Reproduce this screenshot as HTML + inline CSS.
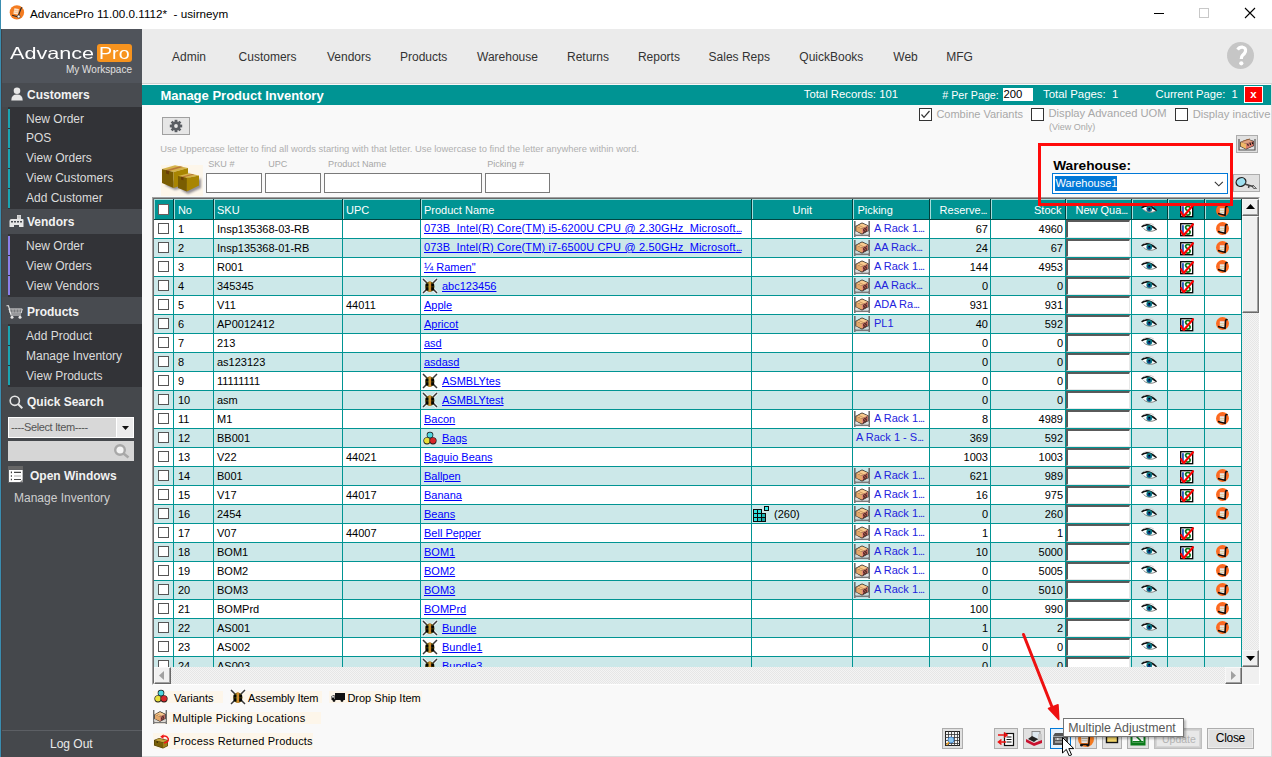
<!DOCTYPE html><html><head><meta charset='utf-8'><style>
*{margin:0;padding:0;box-sizing:border-box}
html,body{width:1272px;height:757px;overflow:hidden;background:#f9f9f9;font-family:"Liberation Sans",sans-serif;position:relative}
.a{position:absolute}
.nw{white-space:nowrap}
</style></head><body><div class="a" style="left:0;top:0;width:1272px;height:29px;background:#fff"></div>
<div class="a" style="left:0;top:0;width:1px;height:757px;background:#3a8db0"></div>
<div class="a nw" style="left:30px;top:8px;font-size:11.7px;line-height:12px;color:#000">AdvancePro 11.00.0.1112*&nbsp; - usirneym</div>
<svg class="a" style="left:9px;top:5px" width="16" height="16" viewBox="0 0 16 16"><circle cx="7.9" cy="7.4" r="7.2" fill="#f47c20"/><path d="M5.4 3.2 L9.9 4 L8.9 9.6 L4.4 8.8 Z" fill="#fde6cc"/><path d="M5 5.2 L9.4 6 M4.7 7 L9.1 7.8" stroke="#f0b080" stroke-width="0.6"/><path d="M13 2.4 L12.1 3.4 L9.3 11 M3.1 10.3 L9.4 12" stroke="#2a2a2a" stroke-width="1.1" fill="none"/><circle cx="9.7" cy="11.5" r="1.5" fill="#fff" stroke="#333" stroke-width="0.6"/></svg>
<div class="a" style="left:1154px;top:13px;width:10px;height:1px;background:#000"></div>
<div class="a" style="left:1199px;top:8px;width:10px;height:10px;border:1px solid #c8c8c8"></div>
<svg class="a" style="left:1244px;top:7px" width="12" height="12" viewBox="0 0 12 12"><path d="M1 1 L11 11 M11 1 L1 11" stroke="#000" stroke-width="1.1"/></svg>
<div class="a" style="left:1px;top:29px;width:141px;height:728px;background:#45484c"></div>
<div class="a" style="left:1px;top:29px;width:141px;height:54px;background:#50545b"></div>
<div class="a nw" style="left:10px;top:45.1px;font-size:16.5px;line-height:16.5px;color:#fff;transform-origin:0 0;transform:scaleX(1.31)">Advance</div>
<div class="a" style="left:97px;top:44px;width:35px;height:18px;background:#f7931e;border-radius:3px"></div>
<div class="a nw" style="left:99px;top:45.1px;font-size:16.5px;line-height:16.5px;color:#fff;transform-origin:0 0;transform:scaleX(1.19)">Pro</div>
<div class="a nw" style="left:66px;top:64.53px;font-size:10px;line-height:10px;color:#e0e0e0;font-weight:normal;">My Workspace</div>
<div class="a" style="left:1px;top:83px;width:141px;height:24px;background:#484b50"></div>
<svg class="a" style="left:11px;top:87px" width="12" height="14" viewBox="0 0 12 14"><circle cx="6" cy="3.8" r="3.3" fill="#e8e8e8"/><path d="M0.3 13.5 Q0.3 7.6 6 7.6 Q11.7 7.6 11.7 13.5 Z" fill="#e8e8e8"/></svg>
<div class="a nw" style="left:27px;top:89.24px;font-size:12px;line-height:12px;color:#f2f2f2;font-weight:bold;">Customers</div>
<div class="a" style="left:8px;top:107px;width:134px;height:102px;background:#323337"></div>
<div class="a" style="left:8px;top:109px;width:2px;height:19px;background:#1aa3b0"></div>
<div class="a nw" style="left:26px;top:112.84px;font-size:12px;line-height:12px;color:#dcdcdc;font-weight:normal;">New Order</div>
<div class="a" style="left:8px;top:129px;width:2px;height:19px;background:#1aa3b0"></div>
<div class="a nw" style="left:26px;top:131.74px;font-size:12px;line-height:12px;color:#dcdcdc;font-weight:normal;">POS</div>
<div class="a" style="left:8px;top:149px;width:2px;height:19px;background:#1aa3b0"></div>
<div class="a nw" style="left:26px;top:151.74px;font-size:12px;line-height:12px;color:#dcdcdc;font-weight:normal;">View Orders</div>
<div class="a" style="left:8px;top:169px;width:2px;height:19px;background:#1aa3b0"></div>
<div class="a nw" style="left:26px;top:171.54px;font-size:12px;line-height:12px;color:#dcdcdc;font-weight:normal;">View Customers</div>
<div class="a" style="left:8px;top:189px;width:2px;height:19px;background:#1aa3b0"></div>
<div class="a nw" style="left:26px;top:191.94px;font-size:12px;line-height:12px;color:#dcdcdc;font-weight:normal;">Add Customer</div>
<div class="a" style="left:1px;top:209px;width:141px;height:25px;background:#484b50"></div>
<svg class="a" style="left:9px;top:215px" width="15" height="13" viewBox="0 0 15 13"><path d="M0.5 6 Q0.5 4 2.5 4 L8 4 L8 0 L12 0 L12 4 L13.5 4 Q14.5 4 14.5 5 L14.5 12 L10 12 L10 10 L5 10 L5 12 L0.5 12 Z" fill="#e6e6e6"/><path d="M9 0.5 L9 3.5 M10 0.5 L10 3.5 M11 0.5 L11 3.5" stroke="#9a9a9a" stroke-width="0.5"/><rect x="2" y="6" width="2" height="1.5" fill="#484b50"/><rect x="5" y="6" width="2" height="1.5" fill="#484b50"/><rect x="8" y="6" width="2" height="1.5" fill="#484b50"/><rect x="11" y="6" width="2" height="1.5" fill="#484b50"/></svg>
<div class="a nw" style="left:27px;top:216.24px;font-size:12px;line-height:12px;color:#f2f2f2;font-weight:bold;">Vendors</div>
<div class="a" style="left:8px;top:234px;width:134px;height:63px;background:#323337"></div>
<div class="a" style="left:8px;top:236px;width:2px;height:19px;background:#8b7fe8"></div>
<div class="a nw" style="left:26px;top:239.64px;font-size:12px;line-height:12px;color:#dcdcdc;font-weight:normal;">New Order</div>
<div class="a" style="left:8px;top:256px;width:2px;height:19px;background:#8b7fe8"></div>
<div class="a nw" style="left:26px;top:259.64px;font-size:12px;line-height:12px;color:#dcdcdc;font-weight:normal;">View Orders</div>
<div class="a" style="left:8px;top:276px;width:2px;height:19px;background:#8b7fe8"></div>
<div class="a nw" style="left:26px;top:279.64px;font-size:12px;line-height:12px;color:#dcdcdc;font-weight:normal;">View Vendors</div>
<div class="a" style="left:1px;top:297px;width:141px;height:27px;background:#484b50"></div>
<svg class="a" style="left:6px;top:305px" width="17" height="14" viewBox="0 0 17 14"><path d="M0.5 0.8 L2.5 0.8 L5 10 L15 10" stroke="#e6e6e6" stroke-width="1.1" fill="none"/><path d="M3 4 L16.2 4 L15.2 8 L4.2 8 Z" fill="none" stroke="#e6e6e6" stroke-width="1"/><path d="M7 4 L7 8 M10 4 L10 8 M13 4 L13 8 M3.6 6 L15.7 6" stroke="#b8b8b8" stroke-width="0.9"/><circle cx="6" cy="12.3" r="1.5" fill="#e6e6e6"/><circle cx="14" cy="12.3" r="1.5" fill="#e6e6e6"/></svg>
<div class="a nw" style="left:27px;top:306.24px;font-size:12px;line-height:12px;color:#f2f2f2;font-weight:bold;">Products</div>
<div class="a" style="left:8px;top:324px;width:134px;height:63px;background:#323337"></div>
<div class="a" style="left:8px;top:326px;width:2px;height:19px;background:#1aa3b0"></div>
<div class="a nw" style="left:26px;top:329.64px;font-size:12px;line-height:12px;color:#dcdcdc;font-weight:normal;">Add Product</div>
<div class="a" style="left:8px;top:346px;width:2px;height:19px;background:#1aa3b0"></div>
<div class="a nw" style="left:26px;top:349.64px;font-size:12px;line-height:12px;color:#dcdcdc;font-weight:normal;">Manage Inventory</div>
<div class="a" style="left:8px;top:366px;width:2px;height:19px;background:#1aa3b0"></div>
<div class="a nw" style="left:26px;top:369.64px;font-size:12px;line-height:12px;color:#dcdcdc;font-weight:normal;">View Products</div>
<svg class="a" style="left:9px;top:395px" width="14" height="14" viewBox="0 0 14 14"><circle cx="5.8" cy="5.8" r="4.6" stroke="#e6e6e6" stroke-width="1.6" fill="none"/><path d="M9 9 L13.3 13.3" stroke="#e6e6e6" stroke-width="2"/></svg>
<div class="a nw" style="left:27px;top:396.34px;font-size:12px;line-height:12px;color:#f2f2f2;font-weight:bold;">Quick Search</div>
<div class="a" style="left:8px;top:417px;width:126px;height:21px;background:#fff"></div>
<div class="a" style="left:9px;top:418px;width:107px;height:19px;background:#d8d8d8"></div>
<div class="a" style="left:117px;top:418px;width:16px;height:19px;background:#ececec"></div>
<svg class="a" style="left:122px;top:426px" width="7" height="4" viewBox="0 0 7 4"><path d="M0 0 L7 0 L3.5 4 Z" fill="#111"/></svg>
<div class="a nw" style="left:11px;top:422.19px;font-size:11px;line-height:11px;color:#555;font-weight:normal;letter-spacing:-0.4px">----Select Item----</div>
<div class="a" style="left:8px;top:441px;width:126px;height:20px;background:#d6d6d6"></div>
<svg class="a" style="left:113px;top:443px" width="18" height="16" viewBox="0 0 18 16"><circle cx="7" cy="7" r="4.8" stroke="#a8a8a8" stroke-width="2.4" fill="#f4f4f4"/><path d="M10.5 10.5 L15.5 14.5" stroke="#a8a8a8" stroke-width="2.6"/></svg>
<svg class="a" style="left:8px;top:466px" width="15" height="17" viewBox="0 0 15 17"><rect x="0" y="0" width="15" height="17" fill="#5e6064"/><rect x="0" y="0" width="15" height="3.5" fill="#666"/><rect x="1" y="4" width="13.6" height="12" fill="#fdfdfd"/><path d="M3.4 5.6 L3.4 7.2 M3.4 9.2 L3.4 10.8 M3.4 12.7 L3.4 14.3" stroke="#333" stroke-width="1.1"/><path d="M6 6.4 L13 6.4 M6 13.5 L13 13.5" stroke="#444" stroke-width="1.1"/><path d="M6 10 L13 10" stroke="#cfcfcf" stroke-width="1.8"/><path d="M12 16 L14.6 13.4 L14.6 16 Z" fill="#888"/></svg>
<div class="a nw" style="left:30px;top:470.14px;font-size:12px;line-height:12px;color:#f2f2f2;font-weight:bold;">Open Windows</div>
<div class="a nw" style="left:14px;top:491.84px;font-size:12px;line-height:12px;color:#cfcfcf;font-weight:normal;">Manage Inventory</div>
<div class="a" style="left:2px;top:730px;width:140px;height:1px;background:#5c5f64"></div>
<div class="a nw" style="left:50px;top:737.84px;font-size:12px;line-height:12px;color:#eaeaea;font-weight:normal;">Log Out</div>
<div class="a" style="left:0;top:29px;width:1px;height:728px;background:#3a8db0"></div>
<div class="a" style="left:1px;top:29px;width:1px;height:728px;background:#404348"></div>
<div class="a" style="left:142px;top:29px;width:1130px;height:54px;background:#ebebeb"></div>
<div class="a" style="left:142px;top:83px;width:1130px;height:1px;background:#d2d2d2"></div>
<div class="a nw" style="left:172px;top:51.24px;font-size:12px;line-height:12px;color:#333;font-weight:normal;">Admin</div>
<div class="a nw" style="left:238.6px;top:51.24px;font-size:12px;line-height:12px;color:#333;font-weight:normal;">Customers</div>
<div class="a nw" style="left:327px;top:51.24px;font-size:12px;line-height:12px;color:#333;font-weight:normal;">Vendors</div>
<div class="a nw" style="left:400px;top:51.24px;font-size:12px;line-height:12px;color:#333;font-weight:normal;">Products</div>
<div class="a nw" style="left:477px;top:51.24px;font-size:12px;line-height:12px;color:#333;font-weight:normal;">Warehouse</div>
<div class="a nw" style="left:567px;top:51.24px;font-size:12px;line-height:12px;color:#333;font-weight:normal;">Returns</div>
<div class="a nw" style="left:637.9px;top:51.24px;font-size:12px;line-height:12px;color:#333;font-weight:normal;">Reports</div>
<div class="a nw" style="left:708.6px;top:51.24px;font-size:12px;line-height:12px;color:#333;font-weight:normal;">Sales Reps</div>
<div class="a nw" style="left:799.3px;top:51.24px;font-size:12px;line-height:12px;color:#333;font-weight:normal;">QuickBooks</div>
<div class="a nw" style="left:893.3px;top:51.24px;font-size:12px;line-height:12px;color:#333;font-weight:normal;">Web</div>
<div class="a nw" style="left:946.3px;top:51.24px;font-size:12px;line-height:12px;color:#333;font-weight:normal;">MFG</div>
<div class="a" style="left:1227px;top:42px;width:27px;height:27px;border-radius:50%;background:#c6c6c6"></div>
<svg class="a" style="left:1227px;top:42px" width="27" height="27" viewBox="1227 42 27 27"><path d="M1237.6 49.6 Q1239.5 46.8 1242.6 47.2 Q1246.3 48 1245.4 51.6 Q1244.6 53.8 1242.6 55.3 Q1241.4 56.4 1241.3 59" stroke="#fff" stroke-width="3.2" fill="none" stroke-linecap="butt"/><circle cx="1241.3" cy="63.3" r="2.1" fill="#fff"/></svg>
<div class="a" style="left:142px;top:84px;width:1130px;height:673px;background:#f9f9f9"></div>
<div class="a" style="left:142px;top:85px;width:1129px;height:20px;background:#009493"></div>
<div class="a nw" style="left:160.4px;top:89.10px;font-size:13px;line-height:13px;color:#fff;font-weight:bold;">Manage Product Inventory</div>
<div class="a nw" style="left:803.8px;top:88.53px;font-size:11.3px;line-height:11.3px;color:#fff;font-weight:normal;">Total Records: 101</div>
<div class="a nw" style="left:942.3px;top:89.94px;font-size:10.7px;line-height:10.7px;color:#fff;font-weight:normal;"># Per Page:</div>
<div class="a" style="left:1003px;top:88px;width:30px;height:13px;background:#fff"></div>
<div class="a nw" style="left:1003.5px;top:89.43px;font-size:11.3px;line-height:11.3px;color:#000;font-weight:normal;">200</div>
<div class="a nw" style="left:1043px;top:89.05px;font-size:11.4px;line-height:11.4px;color:#fff;font-weight:normal;">Total Pages:&nbsp; 1</div>
<div class="a nw" style="left:1155.6px;top:88.62px;font-size:11.2px;line-height:11.2px;color:#fff;font-weight:normal;">Current Page:&nbsp; 1</div>
<div class="a" style="left:1244px;top:86px;width:19px;height:17px;background:#fff"></div>
<div class="a" style="left:1245px;top:87px;width:17px;height:15px;background:#ff0000"></div>
<div class="a nw" style="left:1250.3px;top:88.57px;font-size:11.5px;line-height:11.5px;color:#fff;font-weight:bold;">x</div>
<div class="a" style="left:919px;top:108px;width:13px;height:13px;border:1px solid #333;background:#fff"></div>
<svg class="a" style="left:919px;top:108px" width="13" height="13" viewBox="0 0 13 13"><path d="M2.5 6.5 L5 9.3 L10.5 3" stroke="#333" stroke-width="1.2" fill="none"/></svg>
<div class="a nw" style="left:936.4px;top:109.19px;font-size:11px;line-height:11px;color:#a8a8a8;font-weight:normal;">Combine Variants</div>
<div class="a" style="left:1031px;top:108px;width:13px;height:13px;border:1px solid #333;background:#fff"></div>
<div class="a nw" style="left:1048.5px;top:107.82px;font-size:11.2px;line-height:11.2px;color:#a8a8a8;font-weight:normal;">Display Advanced UOM</div>
<div class="a nw" style="left:1049px;top:123.38px;font-size:9px;line-height:9px;color:#a8a8a8;font-weight:normal;">(View Only)</div>
<div class="a" style="left:1175px;top:108px;width:13px;height:13px;border:1px solid #333;background:#fff"></div>
<div class="a nw" style="left:1192.7px;top:109.02px;font-size:11.2px;line-height:11.2px;color:#a8a8a8;font-weight:normal;">Display inactive</div>
<div class="a" style="left:162px;top:117px;width:28px;height:18px;border:1px solid #a0a0a0;background:#e6e6e6"></div>
<svg class="a" style="left:169px;top:119px" width="14" height="14" viewBox="0 0 14 14"><g fill="#5a5e63"><circle cx="7" cy="7" r="4.6"/><rect x="5.6" y="0.8" width="2.8" height="12.4"/><rect x="0.8" y="5.6" width="12.4" height="2.8"/><rect x="5.6" y="0.8" width="2.8" height="12.4" transform="rotate(45 7 7)"/><rect x="5.6" y="0.8" width="2.8" height="12.4" transform="rotate(-45 7 7)"/></g><circle cx="7" cy="7" r="1.9" fill="#e6e6e6"/></svg>
<div class="a nw" style="left:160.2px;top:144.34px;font-size:9.4px;line-height:9.4px;color:#b0b0b0;font-weight:normal;">Use Uppercase letter to find all words starting with that letter. Use lowercase to find the letter anywhere within word.</div>
<div class="a" style="left:161px;top:165px;width:42px;height:31px;background:#fdf6ea"></div>
<svg class="a" style="left:161px;top:165px" width="42" height="31" viewBox="0 0 42 31">
<defs><filter id="sh" x="-30%" y="-30%" width="160%" height="160%"><feGaussianBlur stdDeviation="1.3"/></filter></defs>
<path d="M4 20 L14 25 L28 21 L28 8 Z M20 25 L27 29 L40 23 L40 13 Z" fill="#3a3a50" opacity="0.55" filter="url(#sh)"/>
<path d="M1 4 L14 0.3 L27 3 L12.5 7 Z" fill="#d6b44c"/>
<path d="M5 5 L19 1.2 L22 2 L8 6 Z" fill="#b8783a"/>
<path d="M1 4 L12.5 7 L12.5 23 L1 18 Z" fill="#7a5d02"/>
<path d="M12.5 7 L27 3 L27 18 L12.5 23 Z" fill="#a88502"/>
<path d="M5 5.2 L8 6 L8 9.5 L5 8.6 Z" fill="#6a3e08"/>
<path d="M17 11 L28 8.3 L38 10.5 L25.9 13 Z" fill="#d6b44c"/>
<path d="M20 11.7 L31 9 L33.5 9.6 L22.5 12.3 Z" fill="#b8783a"/>
<path d="M17 11 L25.9 13 L25.9 26.4 L17 23 Z" fill="#7a5d02"/>
<path d="M25.9 13 L38 10.5 L38 20.6 L25.9 26.4 Z" fill="#a88502"/>
<path d="M20 11.8 L22.5 12.4 L22.5 15.2 L20 14.5 Z" fill="#6a3e08"/>
</svg>
<div class="a nw" style="left:208.2px;top:160.20px;font-size:9.1px;line-height:9.1px;color:#a8a8a8;font-weight:normal;">SKU #</div>
<div class="a nw" style="left:268.2px;top:160.20px;font-size:9.1px;line-height:9.1px;color:#a8a8a8;font-weight:normal;">UPC</div>
<div class="a nw" style="left:328.1px;top:160.20px;font-size:9.1px;line-height:9.1px;color:#a8a8a8;font-weight:normal;">Product Name</div>
<div class="a nw" style="left:487.2px;top:160.20px;font-size:9.1px;line-height:9.1px;color:#a8a8a8;font-weight:normal;">Picking #</div>
<div class="a" style="left:206px;top:173px;width:56px;height:20px;border:1px solid #7a7a7a;background:#fff"></div>
<div class="a" style="left:265px;top:173px;width:56px;height:20px;border:1px solid #7a7a7a;background:#fff"></div>
<div class="a" style="left:324px;top:173px;width:158px;height:20px;border:1px solid #7a7a7a;background:#fff"></div>
<div class="a" style="left:485px;top:173px;width:65px;height:20px;border:1px solid #7a7a7a;background:#fff"></div>
<svg width="0" height="0" style="position:absolute">
<symbol id="ibox" viewBox="0 0 16 16">
<rect x="0" y="0" width="1.6" height="16" fill="#6e6e6e"/><rect x="14.4" y="0" width="1.6" height="16" fill="#6e6e6e"/>
<rect x="0" y="13.5" width="16" height="1.6" fill="#7a7a7a"/><rect x="1" y="11.5" width="14" height="1.2" fill="#cfcfcf"/>
<path d="M1.5 5 L8 1.5 L14.5 4.5 L14.5 10 L8 13.5 L1.5 10 Z" fill="#1a1a1a"/>
<path d="M2.2 5.2 L8 2.2 L13.8 4.8 L8 7.8 Z" fill="#f7c98e"/>
<path d="M2.2 5.2 L8 7.8 L8 12.8 L2.2 10 Z" fill="#e3a86a"/>
<path d="M8 7.8 L13.8 4.8 L13.8 9.8 L8 12.8 Z" fill="#e58a7a"/>
<path d="M9 8.5 L13 6.5 M9 10 L13 8 M9 11.5 L13 9.5" stroke="#2a0a0a" stroke-width="0.9"/>
<path d="M4 4.2 L10 6.8" stroke="#c08850" stroke-width="0.8"/>
</symbol>
<symbol id="iasm" viewBox="0 0 16 16">
<path d="M1 1 L15 15 M15 1 L1 15" stroke="#fff" stroke-width="3"/>
<path d="M1 1 L15 15 M15 1 L1 15" stroke="#383838" stroke-width="1.5"/>
<ellipse cx="7.8" cy="8.6" rx="4.6" ry="5.2" fill="#6a5a0a"/>
<path d="M6.6 3.8 Q7.8 3 9 3.8 L9 13.4 Q7.8 14 6.6 13.4 Z" fill="#d4862a"/>
<path d="M6.6 5 L7.2 5 L7.2 12.5 L6.6 12.5 Z" fill="#a8c040"/>
<rect x="3.6" y="5.6" width="2.8" height="3" fill="#050505"/><rect x="9.3" y="5.6" width="2.8" height="3" fill="#050505"/>
<rect x="3.6" y="9.2" width="2.8" height="3.2" fill="#050505"/><rect x="9.3" y="9.2" width="2.8" height="3.2" fill="#050505"/>
</symbol>
<symbol id="ivar" viewBox="0 0 14 14">
<circle cx="7" cy="4" r="3.3" fill="#1a1a1a"/><circle cx="7" cy="4" r="2.6" fill="#4fd7e0"/>
<circle cx="4" cy="9.8" r="3.6" fill="#1a1a1a"/><circle cx="4" cy="9.6" r="2.9" fill="#e8e03a"/>
<circle cx="10" cy="9.8" r="3.6" fill="#1a1a1a"/><circle cx="10" cy="9.6" r="2.9" fill="#d8282a"/>
</symbol>
<symbol id="ieye" viewBox="0 0 16 10">
<path d="M1 4.5 Q8 -1.5 15.5 6.5 Q8 11 1 4.5 Z" fill="#fff"/>
<path d="M0.6 3.8 Q7 -1.2 15.6 6.8" stroke="#111" stroke-width="1.5" fill="none"/>
<path d="M2.5 5.5 Q7 10.2 14.6 7.2" stroke="#8a8a8a" stroke-width="1" fill="none"/>
<path d="M3 1.5 Q8 -1.5 13 2.2" stroke="#c8c8c8" stroke-width="0.8" fill="none"/>
<circle cx="8.3" cy="5" r="2.9" fill="#0b7c84"/><circle cx="8.1" cy="5.6" r="1.6" fill="#0a3a8a"/><circle cx="8.3" cy="4.6" r="0.9" fill="#050505"/>
</symbol>
<symbol id="ichk" viewBox="0 0 14 14">
<rect x="0.7" y="0.7" width="12" height="12" fill="#fff" stroke="#000" stroke-width="1.3"/>
<rect x="2.1" y="2.2" width="1.7" height="8.8" fill="#1a48b8"/>
<path d="M10.4 3.6 Q9.2 2.4 7.6 2.5 Q5.4 2.8 5.6 4.6 Q5.9 6 8 6.8 Q10.3 7.7 10.1 9.3 Q9.8 11.1 7.5 11.1 Q6 11.1 5 10.2" stroke="#0a7a1a" stroke-width="1.7" fill="none"/>
<path d="M0.6 7.4 L3.6 12.2 L13.6 0.6" stroke="#ff0000" stroke-width="2.1" fill="none" stroke-linejoin="bevel"/>
</symbol>
<symbol id="iorg" viewBox="0 0 13 13">
<circle cx="6.5" cy="6.5" r="6.5" fill="#ff6a1a"/><circle cx="6.5" cy="6.5" r="5" fill="#fa6a28"/>
<path d="M3.8 4.3 L8.6 4.3 L8.4 10 L3.8 10 Z" fill="#e8e8e8"/>
<path d="M4 6.6 L8.4 6.6 M4 8.4 L8.4 8.4" stroke="#d8c070" stroke-width="0.6"/>
<path d="M11.6 2.8 Q10.4 2.2 9.6 3.2 L9.1 11.4 L2 9.6" stroke="#0c0c0c" stroke-width="1.5" fill="none"/>
</symbol>
</svg>
<div class="a" style="left:152px;top:197px;width:1108px;height:488px;border-top:1px solid #a0a0a0;border-left:1px solid #a0a0a0;border-right:1px solid #fff;border-bottom:1px solid #fff"></div>
<div class="a" style="left:153px;top:198px;width:1106px;height:486px;border-top:1px solid #696969;border-left:1px solid #696969;border-right:1px solid #e3e3e3;border-bottom:1px solid #e3e3e3"></div>
<div class="a" style="left:154px;top:199px;width:1088px;height:468px;overflow:hidden;background:#fff">
<div class="a" style="left:0px;top:0px;width:1088px;height:21px;background:#009493"></div>
<div class="a" style="left:0px;top:0px;width:1088px;height:1px;background:#a6dcdb"></div>
<div class="a" style="left:0px;top:20px;width:1088px;height:1px;background:#004643"></div>
<div class="a" style="left:19px;top:0px;width:1px;height:20px;background:#00403d"></div>
<div class="a" style="left:20px;top:1px;width:1px;height:19px;background:#a6dcdb"></div>
<div class="a" style="left:59px;top:0px;width:1px;height:20px;background:#00403d"></div>
<div class="a" style="left:60px;top:1px;width:1px;height:19px;background:#a6dcdb"></div>
<div class="a" style="left:188px;top:0px;width:1px;height:20px;background:#00403d"></div>
<div class="a" style="left:189px;top:1px;width:1px;height:19px;background:#a6dcdb"></div>
<div class="a" style="left:266px;top:0px;width:1px;height:20px;background:#00403d"></div>
<div class="a" style="left:267px;top:1px;width:1px;height:19px;background:#a6dcdb"></div>
<div class="a" style="left:597px;top:0px;width:1px;height:20px;background:#00403d"></div>
<div class="a" style="left:598px;top:1px;width:1px;height:19px;background:#a6dcdb"></div>
<div class="a" style="left:698px;top:0px;width:1px;height:20px;background:#00403d"></div>
<div class="a" style="left:699px;top:1px;width:1px;height:19px;background:#a6dcdb"></div>
<div class="a" style="left:775px;top:0px;width:1px;height:20px;background:#00403d"></div>
<div class="a" style="left:776px;top:1px;width:1px;height:19px;background:#a6dcdb"></div>
<div class="a" style="left:836px;top:0px;width:1px;height:20px;background:#00403d"></div>
<div class="a" style="left:837px;top:1px;width:1px;height:19px;background:#a6dcdb"></div>
<div class="a" style="left:911px;top:0px;width:1px;height:20px;background:#00403d"></div>
<div class="a" style="left:912px;top:1px;width:1px;height:19px;background:#a6dcdb"></div>
<div class="a" style="left:977px;top:0px;width:1px;height:20px;background:#00403d"></div>
<div class="a" style="left:978px;top:1px;width:1px;height:19px;background:#a6dcdb"></div>
<div class="a" style="left:1013px;top:0px;width:1px;height:20px;background:#00403d"></div>
<div class="a" style="left:1014px;top:1px;width:1px;height:19px;background:#a6dcdb"></div>
<div class="a" style="left:1050px;top:0px;width:1px;height:20px;background:#00403d"></div>
<div class="a" style="left:1051px;top:1px;width:1px;height:19px;background:#a6dcdb"></div>
<div class="a" style="left:1087px;top:0px;width:1px;height:20px;background:#00403d"></div>
<div class="a" style="left:1088px;top:1px;width:1px;height:19px;background:#a6dcdb"></div>
<div class="a" style="left:4px;top:5px;width:11px;height:11px;background:#fff;border:1px solid #6b5d5d"></div>
<div class="a" style="left:0px;top:0px;width:1px;height:20px;background:#a6dcdb"></div>
<div class="a nw" style="left:23.900000000000006px;top:6.29px;font-size:11px;line-height:11px;color:#fff;">No</div>
<div class="a nw" style="left:63px;top:6.29px;font-size:11px;line-height:11px;color:#fff;">SKU</div>
<div class="a nw" style="left:192px;top:6.29px;font-size:11px;line-height:11px;color:#fff;">UPC</div>
<div class="a nw" style="left:270px;top:6.29px;font-size:11px;line-height:11px;color:#fff;">Product Name</div>
<div class="a nw" style="left:638.5px;top:6.29px;font-size:11px;line-height:11px;color:#fff;">Unit</div>
<div class="a nw" style="left:703.4px;top:6.29px;font-size:11px;line-height:11px;color:#fff;">Picking</div>
<div class="a nw" style="left:785.6px;top:6.29px;font-size:11px;line-height:11px;color:#fff;">Reserve<span style="letter-spacing:-1.1px">...</span></div>
<div class="a nw" style="left:707.5px;width:200px;text-align:right;top:6.29px;font-size:11px;line-height:11px;color:#fff">Stock</div>
<div class="a nw" style="left:921.5px;top:6.29px;font-size:11px;line-height:11px;color:#fff;">New Qua<span style="letter-spacing:-1.1px">...</span></div>
<svg class="a" style="left:987px;top:5px" width="16" height="10"><use href="#ieye"/></svg>
<svg class="a" style="left:1026px;top:5px" width="14" height="14"><use href="#ichk"/></svg>
<svg class="a" style="left:1062px;top:5px" width="13" height="13"><use href="#iorg"/></svg>
<div class="a" style="left:0px;top:21px;width:1088px;height:18px;background:#fff"></div>
<div class="a" style="left:0px;top:39px;width:1088px;height:1px;background:#009493"></div>
<div class="a" style="left:19px;top:21px;width:1px;height:18px;background:#009493"></div>
<div class="a" style="left:59px;top:21px;width:1px;height:18px;background:#009493"></div>
<div class="a" style="left:188px;top:21px;width:1px;height:18px;background:#009493"></div>
<div class="a" style="left:266px;top:21px;width:1px;height:18px;background:#009493"></div>
<div class="a" style="left:597px;top:21px;width:1px;height:18px;background:#009493"></div>
<div class="a" style="left:698px;top:21px;width:1px;height:18px;background:#009493"></div>
<div class="a" style="left:775px;top:21px;width:1px;height:18px;background:#009493"></div>
<div class="a" style="left:836px;top:21px;width:1px;height:18px;background:#009493"></div>
<div class="a" style="left:911px;top:21px;width:1px;height:18px;background:#009493"></div>
<div class="a" style="left:977px;top:21px;width:1px;height:18px;background:#009493"></div>
<div class="a" style="left:1013px;top:21px;width:1px;height:18px;background:#009493"></div>
<div class="a" style="left:1050px;top:21px;width:1px;height:18px;background:#009493"></div>
<div class="a" style="left:1087px;top:21px;width:1px;height:18px;background:#009493"></div>
<div class="a" style="left:4px;top:24px;width:11px;height:11px;background:#fff;border:1px solid #555"></div>
<div class="a nw" style="left:24px;top:24.89px;font-size:11px;line-height:11px;color:#000;">1</div>
<div class="a nw" style="left:63px;top:24.89px;font-size:11px;line-height:11px;color:#000;">Insp135368-03-RB</div>
<div class="a nw" style="left:270px;top:23.79px;font-size:11px;line-height:11px;color:#0000ff;text-decoration:underline;letter-spacing:0.15px">073B_Intel(R) Core(TM) i5-6200U CPU @ 2.30GHz_Microsoft<span style="letter-spacing:-1.1px">...</span></div>
<svg class="a" style="left:700px;top:22px" width="16" height="16"><use href="#ibox"/></svg>
<div class="a nw" style="left:720px;top:24.09px;font-size:11px;line-height:11px;color:#2222dd;">A Rack 1<span style="letter-spacing:-1.1px">...</span></div>
<div class="a nw" style="left:634px;width:200px;text-align:right;top:24.89px;font-size:11px;line-height:11px;color:#000">67</div>
<div class="a nw" style="left:709px;width:200px;text-align:right;top:24.89px;font-size:11px;line-height:11px;color:#000">4960</div>
<div class="a" style="left:912px;top:21px;width:64px;height:18px;background:#fff;border-top:2px solid #5a5a5a;border-left:2px solid #5a5a5a;border-right:1px solid #e8e8e8;border-bottom:1px solid #e8e8e8"></div>
<svg class="a" style="left:987px;top:24px" width="16" height="10"><use href="#ieye"/></svg>
<svg class="a" style="left:1026px;top:24px" width="14" height="14"><use href="#ichk"/></svg>
<svg class="a" style="left:1062px;top:23px" width="13" height="13"><use href="#iorg"/></svg>
<div class="a" style="left:0px;top:40px;width:1088px;height:18px;background:#cce8e9"></div>
<div class="a" style="left:0px;top:58px;width:1088px;height:1px;background:#009493"></div>
<div class="a" style="left:19px;top:40px;width:1px;height:18px;background:#009493"></div>
<div class="a" style="left:59px;top:40px;width:1px;height:18px;background:#009493"></div>
<div class="a" style="left:188px;top:40px;width:1px;height:18px;background:#009493"></div>
<div class="a" style="left:266px;top:40px;width:1px;height:18px;background:#009493"></div>
<div class="a" style="left:597px;top:40px;width:1px;height:18px;background:#009493"></div>
<div class="a" style="left:698px;top:40px;width:1px;height:18px;background:#009493"></div>
<div class="a" style="left:775px;top:40px;width:1px;height:18px;background:#009493"></div>
<div class="a" style="left:836px;top:40px;width:1px;height:18px;background:#009493"></div>
<div class="a" style="left:911px;top:40px;width:1px;height:18px;background:#009493"></div>
<div class="a" style="left:977px;top:40px;width:1px;height:18px;background:#009493"></div>
<div class="a" style="left:1013px;top:40px;width:1px;height:18px;background:#009493"></div>
<div class="a" style="left:1050px;top:40px;width:1px;height:18px;background:#009493"></div>
<div class="a" style="left:1087px;top:40px;width:1px;height:18px;background:#009493"></div>
<div class="a" style="left:4px;top:43px;width:11px;height:11px;background:#fff;border:1px solid #555"></div>
<div class="a nw" style="left:24px;top:43.89px;font-size:11px;line-height:11px;color:#000;">2</div>
<div class="a nw" style="left:63px;top:43.89px;font-size:11px;line-height:11px;color:#000;">Insp135368-01-RB</div>
<div class="a nw" style="left:270px;top:42.79px;font-size:11px;line-height:11px;color:#0000ff;text-decoration:underline;letter-spacing:0.15px">073B_Intel(R) Core(TM) i7-6500U CPU @ 2.50GHz_Microsoft<span style="letter-spacing:-1.1px">...</span></div>
<svg class="a" style="left:700px;top:41px" width="16" height="16"><use href="#ibox"/></svg>
<div class="a nw" style="left:720px;top:43.09px;font-size:11px;line-height:11px;color:#2222dd;">AA Rack<span style="letter-spacing:-1.1px">...</span></div>
<div class="a nw" style="left:634px;width:200px;text-align:right;top:43.89px;font-size:11px;line-height:11px;color:#000">24</div>
<div class="a nw" style="left:709px;width:200px;text-align:right;top:43.89px;font-size:11px;line-height:11px;color:#000">67</div>
<div class="a" style="left:912px;top:40px;width:64px;height:18px;background:#fff;border-top:2px solid #5a5a5a;border-left:2px solid #5a5a5a;border-right:1px solid #e8e8e8;border-bottom:1px solid #e8e8e8"></div>
<svg class="a" style="left:987px;top:43px" width="16" height="10"><use href="#ieye"/></svg>
<svg class="a" style="left:1026px;top:43px" width="14" height="14"><use href="#ichk"/></svg>
<svg class="a" style="left:1062px;top:42px" width="13" height="13"><use href="#iorg"/></svg>
<div class="a" style="left:0px;top:59px;width:1088px;height:18px;background:#fff"></div>
<div class="a" style="left:0px;top:77px;width:1088px;height:1px;background:#009493"></div>
<div class="a" style="left:19px;top:59px;width:1px;height:18px;background:#009493"></div>
<div class="a" style="left:59px;top:59px;width:1px;height:18px;background:#009493"></div>
<div class="a" style="left:188px;top:59px;width:1px;height:18px;background:#009493"></div>
<div class="a" style="left:266px;top:59px;width:1px;height:18px;background:#009493"></div>
<div class="a" style="left:597px;top:59px;width:1px;height:18px;background:#009493"></div>
<div class="a" style="left:698px;top:59px;width:1px;height:18px;background:#009493"></div>
<div class="a" style="left:775px;top:59px;width:1px;height:18px;background:#009493"></div>
<div class="a" style="left:836px;top:59px;width:1px;height:18px;background:#009493"></div>
<div class="a" style="left:911px;top:59px;width:1px;height:18px;background:#009493"></div>
<div class="a" style="left:977px;top:59px;width:1px;height:18px;background:#009493"></div>
<div class="a" style="left:1013px;top:59px;width:1px;height:18px;background:#009493"></div>
<div class="a" style="left:1050px;top:59px;width:1px;height:18px;background:#009493"></div>
<div class="a" style="left:1087px;top:59px;width:1px;height:18px;background:#009493"></div>
<div class="a" style="left:4px;top:62px;width:11px;height:11px;background:#fff;border:1px solid #555"></div>
<div class="a nw" style="left:24px;top:62.89px;font-size:11px;line-height:11px;color:#000;">3</div>
<div class="a nw" style="left:63px;top:62.89px;font-size:11px;line-height:11px;color:#000;">R001</div>
<div class="a nw" style="left:270px;top:62.89px;font-size:11px;line-height:11px;color:#0000ff;text-decoration:underline">&frac14; Ramen&quot;</div>
<svg class="a" style="left:700px;top:60px" width="16" height="16"><use href="#ibox"/></svg>
<div class="a nw" style="left:720px;top:62.09px;font-size:11px;line-height:11px;color:#2222dd;">A Rack 1<span style="letter-spacing:-1.1px">...</span></div>
<div class="a nw" style="left:634px;width:200px;text-align:right;top:62.89px;font-size:11px;line-height:11px;color:#000">144</div>
<div class="a nw" style="left:709px;width:200px;text-align:right;top:62.89px;font-size:11px;line-height:11px;color:#000">4953</div>
<div class="a" style="left:912px;top:59px;width:64px;height:18px;background:#fff;border-top:2px solid #5a5a5a;border-left:2px solid #5a5a5a;border-right:1px solid #e8e8e8;border-bottom:1px solid #e8e8e8"></div>
<svg class="a" style="left:987px;top:62px" width="16" height="10"><use href="#ieye"/></svg>
<svg class="a" style="left:1026px;top:62px" width="14" height="14"><use href="#ichk"/></svg>
<svg class="a" style="left:1062px;top:61px" width="13" height="13"><use href="#iorg"/></svg>
<div class="a" style="left:0px;top:78px;width:1088px;height:18px;background:#cce8e9"></div>
<div class="a" style="left:0px;top:96px;width:1088px;height:1px;background:#009493"></div>
<div class="a" style="left:19px;top:78px;width:1px;height:18px;background:#009493"></div>
<div class="a" style="left:59px;top:78px;width:1px;height:18px;background:#009493"></div>
<div class="a" style="left:188px;top:78px;width:1px;height:18px;background:#009493"></div>
<div class="a" style="left:266px;top:78px;width:1px;height:18px;background:#009493"></div>
<div class="a" style="left:597px;top:78px;width:1px;height:18px;background:#009493"></div>
<div class="a" style="left:698px;top:78px;width:1px;height:18px;background:#009493"></div>
<div class="a" style="left:775px;top:78px;width:1px;height:18px;background:#009493"></div>
<div class="a" style="left:836px;top:78px;width:1px;height:18px;background:#009493"></div>
<div class="a" style="left:911px;top:78px;width:1px;height:18px;background:#009493"></div>
<div class="a" style="left:977px;top:78px;width:1px;height:18px;background:#009493"></div>
<div class="a" style="left:1013px;top:78px;width:1px;height:18px;background:#009493"></div>
<div class="a" style="left:1050px;top:78px;width:1px;height:18px;background:#009493"></div>
<div class="a" style="left:1087px;top:78px;width:1px;height:18px;background:#009493"></div>
<div class="a" style="left:4px;top:81px;width:11px;height:11px;background:#fff;border:1px solid #555"></div>
<div class="a nw" style="left:24px;top:81.89px;font-size:11px;line-height:11px;color:#000;">4</div>
<div class="a nw" style="left:63px;top:81.89px;font-size:11px;line-height:11px;color:#000;">345345</div>
<svg class="a" style="left:268px;top:79px" width="16" height="16"><use href="#iasm"/></svg>
<div class="a nw" style="left:288px;top:81.89px;font-size:11px;line-height:11px;color:#0000ff;text-decoration:underline">abc123456</div>
<svg class="a" style="left:700px;top:79px" width="16" height="16"><use href="#ibox"/></svg>
<div class="a nw" style="left:720px;top:81.09px;font-size:11px;line-height:11px;color:#2222dd;">AA Rack<span style="letter-spacing:-1.1px">...</span></div>
<div class="a nw" style="left:634px;width:200px;text-align:right;top:81.89px;font-size:11px;line-height:11px;color:#000">0</div>
<div class="a nw" style="left:709px;width:200px;text-align:right;top:81.89px;font-size:11px;line-height:11px;color:#000">0</div>
<div class="a" style="left:912px;top:78px;width:64px;height:18px;background:#fff;border-top:2px solid #5a5a5a;border-left:2px solid #5a5a5a;border-right:1px solid #e8e8e8;border-bottom:1px solid #e8e8e8"></div>
<svg class="a" style="left:987px;top:81px" width="16" height="10"><use href="#ieye"/></svg>
<svg class="a" style="left:1026px;top:81px" width="14" height="14"><use href="#ichk"/></svg>
<div class="a" style="left:0px;top:97px;width:1088px;height:18px;background:#fff"></div>
<div class="a" style="left:0px;top:115px;width:1088px;height:1px;background:#009493"></div>
<div class="a" style="left:19px;top:97px;width:1px;height:18px;background:#009493"></div>
<div class="a" style="left:59px;top:97px;width:1px;height:18px;background:#009493"></div>
<div class="a" style="left:188px;top:97px;width:1px;height:18px;background:#009493"></div>
<div class="a" style="left:266px;top:97px;width:1px;height:18px;background:#009493"></div>
<div class="a" style="left:597px;top:97px;width:1px;height:18px;background:#009493"></div>
<div class="a" style="left:698px;top:97px;width:1px;height:18px;background:#009493"></div>
<div class="a" style="left:775px;top:97px;width:1px;height:18px;background:#009493"></div>
<div class="a" style="left:836px;top:97px;width:1px;height:18px;background:#009493"></div>
<div class="a" style="left:911px;top:97px;width:1px;height:18px;background:#009493"></div>
<div class="a" style="left:977px;top:97px;width:1px;height:18px;background:#009493"></div>
<div class="a" style="left:1013px;top:97px;width:1px;height:18px;background:#009493"></div>
<div class="a" style="left:1050px;top:97px;width:1px;height:18px;background:#009493"></div>
<div class="a" style="left:1087px;top:97px;width:1px;height:18px;background:#009493"></div>
<div class="a" style="left:4px;top:100px;width:11px;height:11px;background:#fff;border:1px solid #555"></div>
<div class="a nw" style="left:24px;top:100.89px;font-size:11px;line-height:11px;color:#000;">5</div>
<div class="a nw" style="left:63px;top:100.89px;font-size:11px;line-height:11px;color:#000;">V11</div>
<div class="a nw" style="left:192px;top:100.89px;font-size:11px;line-height:11px;color:#000;">44011</div>
<div class="a nw" style="left:270px;top:100.89px;font-size:11px;line-height:11px;color:#0000ff;text-decoration:underline">Apple</div>
<svg class="a" style="left:700px;top:98px" width="16" height="16"><use href="#ibox"/></svg>
<div class="a nw" style="left:720px;top:100.09px;font-size:11px;line-height:11px;color:#2222dd;">ADA Ra<span style="letter-spacing:-1.1px">...</span></div>
<div class="a nw" style="left:634px;width:200px;text-align:right;top:100.89px;font-size:11px;line-height:11px;color:#000">931</div>
<div class="a nw" style="left:709px;width:200px;text-align:right;top:100.89px;font-size:11px;line-height:11px;color:#000">931</div>
<div class="a" style="left:912px;top:97px;width:64px;height:18px;background:#fff;border-top:2px solid #5a5a5a;border-left:2px solid #5a5a5a;border-right:1px solid #e8e8e8;border-bottom:1px solid #e8e8e8"></div>
<svg class="a" style="left:987px;top:100px" width="16" height="10"><use href="#ieye"/></svg>
<div class="a" style="left:0px;top:116px;width:1088px;height:18px;background:#cce8e9"></div>
<div class="a" style="left:0px;top:134px;width:1088px;height:1px;background:#009493"></div>
<div class="a" style="left:19px;top:116px;width:1px;height:18px;background:#009493"></div>
<div class="a" style="left:59px;top:116px;width:1px;height:18px;background:#009493"></div>
<div class="a" style="left:188px;top:116px;width:1px;height:18px;background:#009493"></div>
<div class="a" style="left:266px;top:116px;width:1px;height:18px;background:#009493"></div>
<div class="a" style="left:597px;top:116px;width:1px;height:18px;background:#009493"></div>
<div class="a" style="left:698px;top:116px;width:1px;height:18px;background:#009493"></div>
<div class="a" style="left:775px;top:116px;width:1px;height:18px;background:#009493"></div>
<div class="a" style="left:836px;top:116px;width:1px;height:18px;background:#009493"></div>
<div class="a" style="left:911px;top:116px;width:1px;height:18px;background:#009493"></div>
<div class="a" style="left:977px;top:116px;width:1px;height:18px;background:#009493"></div>
<div class="a" style="left:1013px;top:116px;width:1px;height:18px;background:#009493"></div>
<div class="a" style="left:1050px;top:116px;width:1px;height:18px;background:#009493"></div>
<div class="a" style="left:1087px;top:116px;width:1px;height:18px;background:#009493"></div>
<div class="a" style="left:4px;top:119px;width:11px;height:11px;background:#fff;border:1px solid #555"></div>
<div class="a nw" style="left:24px;top:119.89px;font-size:11px;line-height:11px;color:#000;">6</div>
<div class="a nw" style="left:63px;top:119.89px;font-size:11px;line-height:11px;color:#000;">AP0012412</div>
<div class="a nw" style="left:270px;top:119.89px;font-size:11px;line-height:11px;color:#0000ff;text-decoration:underline">Apricot</div>
<svg class="a" style="left:700px;top:117px" width="16" height="16"><use href="#ibox"/></svg>
<div class="a nw" style="left:720px;top:119.09px;font-size:11px;line-height:11px;color:#2222dd;">PL1</div>
<div class="a nw" style="left:634px;width:200px;text-align:right;top:119.89px;font-size:11px;line-height:11px;color:#000">40</div>
<div class="a nw" style="left:709px;width:200px;text-align:right;top:119.89px;font-size:11px;line-height:11px;color:#000">592</div>
<div class="a" style="left:912px;top:116px;width:64px;height:18px;background:#fff;border-top:2px solid #5a5a5a;border-left:2px solid #5a5a5a;border-right:1px solid #e8e8e8;border-bottom:1px solid #e8e8e8"></div>
<svg class="a" style="left:987px;top:119px" width="16" height="10"><use href="#ieye"/></svg>
<svg class="a" style="left:1026px;top:119px" width="14" height="14"><use href="#ichk"/></svg>
<svg class="a" style="left:1062px;top:118px" width="13" height="13"><use href="#iorg"/></svg>
<div class="a" style="left:0px;top:135px;width:1088px;height:18px;background:#fff"></div>
<div class="a" style="left:0px;top:153px;width:1088px;height:1px;background:#009493"></div>
<div class="a" style="left:19px;top:135px;width:1px;height:18px;background:#009493"></div>
<div class="a" style="left:59px;top:135px;width:1px;height:18px;background:#009493"></div>
<div class="a" style="left:188px;top:135px;width:1px;height:18px;background:#009493"></div>
<div class="a" style="left:266px;top:135px;width:1px;height:18px;background:#009493"></div>
<div class="a" style="left:597px;top:135px;width:1px;height:18px;background:#009493"></div>
<div class="a" style="left:698px;top:135px;width:1px;height:18px;background:#009493"></div>
<div class="a" style="left:775px;top:135px;width:1px;height:18px;background:#009493"></div>
<div class="a" style="left:836px;top:135px;width:1px;height:18px;background:#009493"></div>
<div class="a" style="left:911px;top:135px;width:1px;height:18px;background:#009493"></div>
<div class="a" style="left:977px;top:135px;width:1px;height:18px;background:#009493"></div>
<div class="a" style="left:1013px;top:135px;width:1px;height:18px;background:#009493"></div>
<div class="a" style="left:1050px;top:135px;width:1px;height:18px;background:#009493"></div>
<div class="a" style="left:1087px;top:135px;width:1px;height:18px;background:#009493"></div>
<div class="a" style="left:4px;top:138px;width:11px;height:11px;background:#fff;border:1px solid #555"></div>
<div class="a nw" style="left:24px;top:138.89px;font-size:11px;line-height:11px;color:#000;">7</div>
<div class="a nw" style="left:63px;top:138.89px;font-size:11px;line-height:11px;color:#000;">213</div>
<div class="a nw" style="left:270px;top:138.89px;font-size:11px;line-height:11px;color:#0000ff;text-decoration:underline">asd</div>
<div class="a nw" style="left:634px;width:200px;text-align:right;top:138.89px;font-size:11px;line-height:11px;color:#000">0</div>
<div class="a nw" style="left:709px;width:200px;text-align:right;top:138.89px;font-size:11px;line-height:11px;color:#000">0</div>
<div class="a" style="left:912px;top:135px;width:64px;height:18px;background:#fff;border-top:2px solid #5a5a5a;border-left:2px solid #5a5a5a;border-right:1px solid #e8e8e8;border-bottom:1px solid #e8e8e8"></div>
<svg class="a" style="left:987px;top:138px" width="16" height="10"><use href="#ieye"/></svg>
<div class="a" style="left:0px;top:154px;width:1088px;height:18px;background:#cce8e9"></div>
<div class="a" style="left:0px;top:172px;width:1088px;height:1px;background:#009493"></div>
<div class="a" style="left:19px;top:154px;width:1px;height:18px;background:#009493"></div>
<div class="a" style="left:59px;top:154px;width:1px;height:18px;background:#009493"></div>
<div class="a" style="left:188px;top:154px;width:1px;height:18px;background:#009493"></div>
<div class="a" style="left:266px;top:154px;width:1px;height:18px;background:#009493"></div>
<div class="a" style="left:597px;top:154px;width:1px;height:18px;background:#009493"></div>
<div class="a" style="left:698px;top:154px;width:1px;height:18px;background:#009493"></div>
<div class="a" style="left:775px;top:154px;width:1px;height:18px;background:#009493"></div>
<div class="a" style="left:836px;top:154px;width:1px;height:18px;background:#009493"></div>
<div class="a" style="left:911px;top:154px;width:1px;height:18px;background:#009493"></div>
<div class="a" style="left:977px;top:154px;width:1px;height:18px;background:#009493"></div>
<div class="a" style="left:1013px;top:154px;width:1px;height:18px;background:#009493"></div>
<div class="a" style="left:1050px;top:154px;width:1px;height:18px;background:#009493"></div>
<div class="a" style="left:1087px;top:154px;width:1px;height:18px;background:#009493"></div>
<div class="a" style="left:4px;top:157px;width:11px;height:11px;background:#fff;border:1px solid #555"></div>
<div class="a nw" style="left:24px;top:157.89px;font-size:11px;line-height:11px;color:#000;">8</div>
<div class="a nw" style="left:63px;top:157.89px;font-size:11px;line-height:11px;color:#000;">as123123</div>
<div class="a nw" style="left:270px;top:157.89px;font-size:11px;line-height:11px;color:#0000ff;text-decoration:underline">asdasd</div>
<div class="a nw" style="left:634px;width:200px;text-align:right;top:157.89px;font-size:11px;line-height:11px;color:#000">0</div>
<div class="a nw" style="left:709px;width:200px;text-align:right;top:157.89px;font-size:11px;line-height:11px;color:#000">0</div>
<div class="a" style="left:912px;top:154px;width:64px;height:18px;background:#fff;border-top:2px solid #5a5a5a;border-left:2px solid #5a5a5a;border-right:1px solid #e8e8e8;border-bottom:1px solid #e8e8e8"></div>
<svg class="a" style="left:987px;top:157px" width="16" height="10"><use href="#ieye"/></svg>
<div class="a" style="left:0px;top:173px;width:1088px;height:18px;background:#fff"></div>
<div class="a" style="left:0px;top:191px;width:1088px;height:1px;background:#009493"></div>
<div class="a" style="left:19px;top:173px;width:1px;height:18px;background:#009493"></div>
<div class="a" style="left:59px;top:173px;width:1px;height:18px;background:#009493"></div>
<div class="a" style="left:188px;top:173px;width:1px;height:18px;background:#009493"></div>
<div class="a" style="left:266px;top:173px;width:1px;height:18px;background:#009493"></div>
<div class="a" style="left:597px;top:173px;width:1px;height:18px;background:#009493"></div>
<div class="a" style="left:698px;top:173px;width:1px;height:18px;background:#009493"></div>
<div class="a" style="left:775px;top:173px;width:1px;height:18px;background:#009493"></div>
<div class="a" style="left:836px;top:173px;width:1px;height:18px;background:#009493"></div>
<div class="a" style="left:911px;top:173px;width:1px;height:18px;background:#009493"></div>
<div class="a" style="left:977px;top:173px;width:1px;height:18px;background:#009493"></div>
<div class="a" style="left:1013px;top:173px;width:1px;height:18px;background:#009493"></div>
<div class="a" style="left:1050px;top:173px;width:1px;height:18px;background:#009493"></div>
<div class="a" style="left:1087px;top:173px;width:1px;height:18px;background:#009493"></div>
<div class="a" style="left:4px;top:176px;width:11px;height:11px;background:#fff;border:1px solid #555"></div>
<div class="a nw" style="left:24px;top:176.89px;font-size:11px;line-height:11px;color:#000;">9</div>
<div class="a nw" style="left:63px;top:176.89px;font-size:11px;line-height:11px;color:#000;">11111111</div>
<svg class="a" style="left:268px;top:174px" width="16" height="16"><use href="#iasm"/></svg>
<div class="a nw" style="left:288px;top:176.89px;font-size:11px;line-height:11px;color:#0000ff;text-decoration:underline">ASMBLYtes</div>
<div class="a nw" style="left:634px;width:200px;text-align:right;top:176.89px;font-size:11px;line-height:11px;color:#000">0</div>
<div class="a nw" style="left:709px;width:200px;text-align:right;top:176.89px;font-size:11px;line-height:11px;color:#000">0</div>
<div class="a" style="left:912px;top:173px;width:64px;height:18px;background:#fff;border-top:2px solid #5a5a5a;border-left:2px solid #5a5a5a;border-right:1px solid #e8e8e8;border-bottom:1px solid #e8e8e8"></div>
<svg class="a" style="left:987px;top:176px" width="16" height="10"><use href="#ieye"/></svg>
<div class="a" style="left:0px;top:192px;width:1088px;height:18px;background:#cce8e9"></div>
<div class="a" style="left:0px;top:210px;width:1088px;height:1px;background:#009493"></div>
<div class="a" style="left:19px;top:192px;width:1px;height:18px;background:#009493"></div>
<div class="a" style="left:59px;top:192px;width:1px;height:18px;background:#009493"></div>
<div class="a" style="left:188px;top:192px;width:1px;height:18px;background:#009493"></div>
<div class="a" style="left:266px;top:192px;width:1px;height:18px;background:#009493"></div>
<div class="a" style="left:597px;top:192px;width:1px;height:18px;background:#009493"></div>
<div class="a" style="left:698px;top:192px;width:1px;height:18px;background:#009493"></div>
<div class="a" style="left:775px;top:192px;width:1px;height:18px;background:#009493"></div>
<div class="a" style="left:836px;top:192px;width:1px;height:18px;background:#009493"></div>
<div class="a" style="left:911px;top:192px;width:1px;height:18px;background:#009493"></div>
<div class="a" style="left:977px;top:192px;width:1px;height:18px;background:#009493"></div>
<div class="a" style="left:1013px;top:192px;width:1px;height:18px;background:#009493"></div>
<div class="a" style="left:1050px;top:192px;width:1px;height:18px;background:#009493"></div>
<div class="a" style="left:1087px;top:192px;width:1px;height:18px;background:#009493"></div>
<div class="a" style="left:4px;top:195px;width:11px;height:11px;background:#fff;border:1px solid #555"></div>
<div class="a nw" style="left:24px;top:195.89px;font-size:11px;line-height:11px;color:#000;">10</div>
<div class="a nw" style="left:63px;top:195.89px;font-size:11px;line-height:11px;color:#000;">asm</div>
<svg class="a" style="left:268px;top:193px" width="16" height="16"><use href="#iasm"/></svg>
<div class="a nw" style="left:288px;top:195.89px;font-size:11px;line-height:11px;color:#0000ff;text-decoration:underline">ASMBLYtest</div>
<div class="a nw" style="left:634px;width:200px;text-align:right;top:195.89px;font-size:11px;line-height:11px;color:#000">0</div>
<div class="a nw" style="left:709px;width:200px;text-align:right;top:195.89px;font-size:11px;line-height:11px;color:#000">0</div>
<div class="a" style="left:912px;top:192px;width:64px;height:18px;background:#fff;border-top:2px solid #5a5a5a;border-left:2px solid #5a5a5a;border-right:1px solid #e8e8e8;border-bottom:1px solid #e8e8e8"></div>
<svg class="a" style="left:987px;top:195px" width="16" height="10"><use href="#ieye"/></svg>
<div class="a" style="left:0px;top:211px;width:1088px;height:18px;background:#fff"></div>
<div class="a" style="left:0px;top:229px;width:1088px;height:1px;background:#009493"></div>
<div class="a" style="left:19px;top:211px;width:1px;height:18px;background:#009493"></div>
<div class="a" style="left:59px;top:211px;width:1px;height:18px;background:#009493"></div>
<div class="a" style="left:188px;top:211px;width:1px;height:18px;background:#009493"></div>
<div class="a" style="left:266px;top:211px;width:1px;height:18px;background:#009493"></div>
<div class="a" style="left:597px;top:211px;width:1px;height:18px;background:#009493"></div>
<div class="a" style="left:698px;top:211px;width:1px;height:18px;background:#009493"></div>
<div class="a" style="left:775px;top:211px;width:1px;height:18px;background:#009493"></div>
<div class="a" style="left:836px;top:211px;width:1px;height:18px;background:#009493"></div>
<div class="a" style="left:911px;top:211px;width:1px;height:18px;background:#009493"></div>
<div class="a" style="left:977px;top:211px;width:1px;height:18px;background:#009493"></div>
<div class="a" style="left:1013px;top:211px;width:1px;height:18px;background:#009493"></div>
<div class="a" style="left:1050px;top:211px;width:1px;height:18px;background:#009493"></div>
<div class="a" style="left:1087px;top:211px;width:1px;height:18px;background:#009493"></div>
<div class="a" style="left:4px;top:214px;width:11px;height:11px;background:#fff;border:1px solid #555"></div>
<div class="a nw" style="left:24px;top:214.89px;font-size:11px;line-height:11px;color:#000;">11</div>
<div class="a nw" style="left:63px;top:214.89px;font-size:11px;line-height:11px;color:#000;">M1</div>
<div class="a nw" style="left:270px;top:214.89px;font-size:11px;line-height:11px;color:#0000ff;text-decoration:underline">Bacon</div>
<svg class="a" style="left:700px;top:212px" width="16" height="16"><use href="#ibox"/></svg>
<div class="a nw" style="left:720px;top:214.09px;font-size:11px;line-height:11px;color:#2222dd;">A Rack 1<span style="letter-spacing:-1.1px">...</span></div>
<div class="a nw" style="left:634px;width:200px;text-align:right;top:214.89px;font-size:11px;line-height:11px;color:#000">8</div>
<div class="a nw" style="left:709px;width:200px;text-align:right;top:214.89px;font-size:11px;line-height:11px;color:#000">4989</div>
<div class="a" style="left:912px;top:211px;width:64px;height:18px;background:#fff;border-top:2px solid #5a5a5a;border-left:2px solid #5a5a5a;border-right:1px solid #e8e8e8;border-bottom:1px solid #e8e8e8"></div>
<svg class="a" style="left:987px;top:214px" width="16" height="10"><use href="#ieye"/></svg>
<svg class="a" style="left:1062px;top:213px" width="13" height="13"><use href="#iorg"/></svg>
<div class="a" style="left:0px;top:230px;width:1088px;height:18px;background:#cce8e9"></div>
<div class="a" style="left:0px;top:248px;width:1088px;height:1px;background:#009493"></div>
<div class="a" style="left:19px;top:230px;width:1px;height:18px;background:#009493"></div>
<div class="a" style="left:59px;top:230px;width:1px;height:18px;background:#009493"></div>
<div class="a" style="left:188px;top:230px;width:1px;height:18px;background:#009493"></div>
<div class="a" style="left:266px;top:230px;width:1px;height:18px;background:#009493"></div>
<div class="a" style="left:597px;top:230px;width:1px;height:18px;background:#009493"></div>
<div class="a" style="left:698px;top:230px;width:1px;height:18px;background:#009493"></div>
<div class="a" style="left:775px;top:230px;width:1px;height:18px;background:#009493"></div>
<div class="a" style="left:836px;top:230px;width:1px;height:18px;background:#009493"></div>
<div class="a" style="left:911px;top:230px;width:1px;height:18px;background:#009493"></div>
<div class="a" style="left:977px;top:230px;width:1px;height:18px;background:#009493"></div>
<div class="a" style="left:1013px;top:230px;width:1px;height:18px;background:#009493"></div>
<div class="a" style="left:1050px;top:230px;width:1px;height:18px;background:#009493"></div>
<div class="a" style="left:1087px;top:230px;width:1px;height:18px;background:#009493"></div>
<div class="a" style="left:4px;top:233px;width:11px;height:11px;background:#fff;border:1px solid #555"></div>
<div class="a nw" style="left:24px;top:233.89px;font-size:11px;line-height:11px;color:#000;">12</div>
<div class="a nw" style="left:63px;top:233.89px;font-size:11px;line-height:11px;color:#000;">BB001</div>
<svg class="a" style="left:269px;top:232px" width="14" height="14"><use href="#ivar"/></svg>
<div class="a nw" style="left:288px;top:233.89px;font-size:11px;line-height:11px;color:#0000ff;text-decoration:underline">Bags</div>
<div class="a nw" style="left:702px;top:233.09px;font-size:11px;line-height:11px;color:#2222dd;">A Rack 1 - S<span style="letter-spacing:-1.1px">...</span></div>
<div class="a nw" style="left:634px;width:200px;text-align:right;top:233.89px;font-size:11px;line-height:11px;color:#000">369</div>
<div class="a nw" style="left:709px;width:200px;text-align:right;top:233.89px;font-size:11px;line-height:11px;color:#000">592</div>
<div class="a" style="left:912px;top:230px;width:64px;height:18px;background:#fff;border-top:2px solid #5a5a5a;border-left:2px solid #5a5a5a;border-right:1px solid #e8e8e8;border-bottom:1px solid #e8e8e8"></div>
<div class="a" style="left:0px;top:249px;width:1088px;height:18px;background:#fff"></div>
<div class="a" style="left:0px;top:267px;width:1088px;height:1px;background:#009493"></div>
<div class="a" style="left:19px;top:249px;width:1px;height:18px;background:#009493"></div>
<div class="a" style="left:59px;top:249px;width:1px;height:18px;background:#009493"></div>
<div class="a" style="left:188px;top:249px;width:1px;height:18px;background:#009493"></div>
<div class="a" style="left:266px;top:249px;width:1px;height:18px;background:#009493"></div>
<div class="a" style="left:597px;top:249px;width:1px;height:18px;background:#009493"></div>
<div class="a" style="left:698px;top:249px;width:1px;height:18px;background:#009493"></div>
<div class="a" style="left:775px;top:249px;width:1px;height:18px;background:#009493"></div>
<div class="a" style="left:836px;top:249px;width:1px;height:18px;background:#009493"></div>
<div class="a" style="left:911px;top:249px;width:1px;height:18px;background:#009493"></div>
<div class="a" style="left:977px;top:249px;width:1px;height:18px;background:#009493"></div>
<div class="a" style="left:1013px;top:249px;width:1px;height:18px;background:#009493"></div>
<div class="a" style="left:1050px;top:249px;width:1px;height:18px;background:#009493"></div>
<div class="a" style="left:1087px;top:249px;width:1px;height:18px;background:#009493"></div>
<div class="a" style="left:4px;top:252px;width:11px;height:11px;background:#fff;border:1px solid #555"></div>
<div class="a nw" style="left:24px;top:252.89px;font-size:11px;line-height:11px;color:#000;">13</div>
<div class="a nw" style="left:63px;top:252.89px;font-size:11px;line-height:11px;color:#000;">V22</div>
<div class="a nw" style="left:192px;top:252.89px;font-size:11px;line-height:11px;color:#000;">44021</div>
<div class="a nw" style="left:270px;top:252.89px;font-size:11px;line-height:11px;color:#0000ff;text-decoration:underline">Baguio Beans</div>
<div class="a nw" style="left:634px;width:200px;text-align:right;top:252.89px;font-size:11px;line-height:11px;color:#000">1003</div>
<div class="a nw" style="left:709px;width:200px;text-align:right;top:252.89px;font-size:11px;line-height:11px;color:#000">1003</div>
<div class="a" style="left:912px;top:249px;width:64px;height:18px;background:#fff;border-top:2px solid #5a5a5a;border-left:2px solid #5a5a5a;border-right:1px solid #e8e8e8;border-bottom:1px solid #e8e8e8"></div>
<svg class="a" style="left:987px;top:252px" width="16" height="10"><use href="#ieye"/></svg>
<svg class="a" style="left:1026px;top:252px" width="14" height="14"><use href="#ichk"/></svg>
<div class="a" style="left:0px;top:268px;width:1088px;height:18px;background:#cce8e9"></div>
<div class="a" style="left:0px;top:286px;width:1088px;height:1px;background:#009493"></div>
<div class="a" style="left:19px;top:268px;width:1px;height:18px;background:#009493"></div>
<div class="a" style="left:59px;top:268px;width:1px;height:18px;background:#009493"></div>
<div class="a" style="left:188px;top:268px;width:1px;height:18px;background:#009493"></div>
<div class="a" style="left:266px;top:268px;width:1px;height:18px;background:#009493"></div>
<div class="a" style="left:597px;top:268px;width:1px;height:18px;background:#009493"></div>
<div class="a" style="left:698px;top:268px;width:1px;height:18px;background:#009493"></div>
<div class="a" style="left:775px;top:268px;width:1px;height:18px;background:#009493"></div>
<div class="a" style="left:836px;top:268px;width:1px;height:18px;background:#009493"></div>
<div class="a" style="left:911px;top:268px;width:1px;height:18px;background:#009493"></div>
<div class="a" style="left:977px;top:268px;width:1px;height:18px;background:#009493"></div>
<div class="a" style="left:1013px;top:268px;width:1px;height:18px;background:#009493"></div>
<div class="a" style="left:1050px;top:268px;width:1px;height:18px;background:#009493"></div>
<div class="a" style="left:1087px;top:268px;width:1px;height:18px;background:#009493"></div>
<div class="a" style="left:4px;top:271px;width:11px;height:11px;background:#fff;border:1px solid #555"></div>
<div class="a nw" style="left:24px;top:271.89px;font-size:11px;line-height:11px;color:#000;">14</div>
<div class="a nw" style="left:63px;top:271.89px;font-size:11px;line-height:11px;color:#000;">B001</div>
<div class="a nw" style="left:270px;top:271.89px;font-size:11px;line-height:11px;color:#0000ff;text-decoration:underline">Ballpen</div>
<svg class="a" style="left:700px;top:269px" width="16" height="16"><use href="#ibox"/></svg>
<div class="a nw" style="left:720px;top:271.09px;font-size:11px;line-height:11px;color:#2222dd;">A Rack 1<span style="letter-spacing:-1.1px">...</span></div>
<div class="a nw" style="left:634px;width:200px;text-align:right;top:271.89px;font-size:11px;line-height:11px;color:#000">621</div>
<div class="a nw" style="left:709px;width:200px;text-align:right;top:271.89px;font-size:11px;line-height:11px;color:#000">989</div>
<div class="a" style="left:912px;top:268px;width:64px;height:18px;background:#fff;border-top:2px solid #5a5a5a;border-left:2px solid #5a5a5a;border-right:1px solid #e8e8e8;border-bottom:1px solid #e8e8e8"></div>
<svg class="a" style="left:987px;top:271px" width="16" height="10"><use href="#ieye"/></svg>
<svg class="a" style="left:1026px;top:271px" width="14" height="14"><use href="#ichk"/></svg>
<svg class="a" style="left:1062px;top:270px" width="13" height="13"><use href="#iorg"/></svg>
<div class="a" style="left:0px;top:287px;width:1088px;height:18px;background:#fff"></div>
<div class="a" style="left:0px;top:305px;width:1088px;height:1px;background:#009493"></div>
<div class="a" style="left:19px;top:287px;width:1px;height:18px;background:#009493"></div>
<div class="a" style="left:59px;top:287px;width:1px;height:18px;background:#009493"></div>
<div class="a" style="left:188px;top:287px;width:1px;height:18px;background:#009493"></div>
<div class="a" style="left:266px;top:287px;width:1px;height:18px;background:#009493"></div>
<div class="a" style="left:597px;top:287px;width:1px;height:18px;background:#009493"></div>
<div class="a" style="left:698px;top:287px;width:1px;height:18px;background:#009493"></div>
<div class="a" style="left:775px;top:287px;width:1px;height:18px;background:#009493"></div>
<div class="a" style="left:836px;top:287px;width:1px;height:18px;background:#009493"></div>
<div class="a" style="left:911px;top:287px;width:1px;height:18px;background:#009493"></div>
<div class="a" style="left:977px;top:287px;width:1px;height:18px;background:#009493"></div>
<div class="a" style="left:1013px;top:287px;width:1px;height:18px;background:#009493"></div>
<div class="a" style="left:1050px;top:287px;width:1px;height:18px;background:#009493"></div>
<div class="a" style="left:1087px;top:287px;width:1px;height:18px;background:#009493"></div>
<div class="a" style="left:4px;top:290px;width:11px;height:11px;background:#fff;border:1px solid #555"></div>
<div class="a nw" style="left:24px;top:290.89px;font-size:11px;line-height:11px;color:#000;">15</div>
<div class="a nw" style="left:63px;top:290.89px;font-size:11px;line-height:11px;color:#000;">V17</div>
<div class="a nw" style="left:192px;top:290.89px;font-size:11px;line-height:11px;color:#000;">44017</div>
<div class="a nw" style="left:270px;top:290.89px;font-size:11px;line-height:11px;color:#0000ff;text-decoration:underline">Banana</div>
<svg class="a" style="left:700px;top:288px" width="16" height="16"><use href="#ibox"/></svg>
<div class="a nw" style="left:720px;top:290.09px;font-size:11px;line-height:11px;color:#2222dd;">A Rack 1<span style="letter-spacing:-1.1px">...</span></div>
<div class="a nw" style="left:634px;width:200px;text-align:right;top:290.89px;font-size:11px;line-height:11px;color:#000">16</div>
<div class="a nw" style="left:709px;width:200px;text-align:right;top:290.89px;font-size:11px;line-height:11px;color:#000">975</div>
<div class="a" style="left:912px;top:287px;width:64px;height:18px;background:#fff;border-top:2px solid #5a5a5a;border-left:2px solid #5a5a5a;border-right:1px solid #e8e8e8;border-bottom:1px solid #e8e8e8"></div>
<svg class="a" style="left:987px;top:290px" width="16" height="10"><use href="#ieye"/></svg>
<svg class="a" style="left:1026px;top:290px" width="14" height="14"><use href="#ichk"/></svg>
<svg class="a" style="left:1062px;top:289px" width="13" height="13"><use href="#iorg"/></svg>
<div class="a" style="left:0px;top:306px;width:1088px;height:18px;background:#cce8e9"></div>
<div class="a" style="left:0px;top:324px;width:1088px;height:1px;background:#009493"></div>
<div class="a" style="left:19px;top:306px;width:1px;height:18px;background:#009493"></div>
<div class="a" style="left:59px;top:306px;width:1px;height:18px;background:#009493"></div>
<div class="a" style="left:188px;top:306px;width:1px;height:18px;background:#009493"></div>
<div class="a" style="left:266px;top:306px;width:1px;height:18px;background:#009493"></div>
<div class="a" style="left:597px;top:306px;width:1px;height:18px;background:#009493"></div>
<div class="a" style="left:698px;top:306px;width:1px;height:18px;background:#009493"></div>
<div class="a" style="left:775px;top:306px;width:1px;height:18px;background:#009493"></div>
<div class="a" style="left:836px;top:306px;width:1px;height:18px;background:#009493"></div>
<div class="a" style="left:911px;top:306px;width:1px;height:18px;background:#009493"></div>
<div class="a" style="left:977px;top:306px;width:1px;height:18px;background:#009493"></div>
<div class="a" style="left:1013px;top:306px;width:1px;height:18px;background:#009493"></div>
<div class="a" style="left:1050px;top:306px;width:1px;height:18px;background:#009493"></div>
<div class="a" style="left:1087px;top:306px;width:1px;height:18px;background:#009493"></div>
<div class="a" style="left:4px;top:309px;width:11px;height:11px;background:#fff;border:1px solid #555"></div>
<div class="a nw" style="left:24px;top:309.89px;font-size:11px;line-height:11px;color:#000;">16</div>
<div class="a nw" style="left:63px;top:309.89px;font-size:11px;line-height:11px;color:#000;">2454</div>
<div class="a nw" style="left:270px;top:309.89px;font-size:11px;line-height:11px;color:#0000ff;text-decoration:underline">Beans</div>
<svg class="a" style="left:599px;top:306px" width="17" height="18" viewBox="0 0 17 18"><path d="M0 6 L9 6 L9 10 L13 10 L13 19 L0 19 Z" fill="#0a0a0a" transform="translate(0,-2)"/><g fill="#30e0e0"><rect x="1" y="5" width="3" height="3"/><rect x="5" y="5" width="3" height="3"/><rect x="1" y="9" width="3" height="3"/><rect x="5" y="9" width="3" height="3"/><rect x="9" y="9" width="3" height="3" fill="#20b8b8"/><rect x="1" y="13" width="3" height="3"/><rect x="5" y="13" width="3" height="3" fill="#20c8c8"/><rect x="9" y="13" width="3" height="3" fill="#18a0a0"/></g><rect x="11" y="1" width="5" height="5" fill="#0a0a0a"/><rect x="12" y="2" width="3" height="3" fill="#40e8e8"/></svg>
<div class="a nw" style="left:620px;top:309.89px;font-size:11px;line-height:11px;color:#000;">(260)</div>
<svg class="a" style="left:700px;top:307px" width="16" height="16"><use href="#ibox"/></svg>
<div class="a nw" style="left:720px;top:309.09px;font-size:11px;line-height:11px;color:#2222dd;">A Rack 1<span style="letter-spacing:-1.1px">...</span></div>
<div class="a nw" style="left:634px;width:200px;text-align:right;top:309.89px;font-size:11px;line-height:11px;color:#000">0</div>
<div class="a nw" style="left:709px;width:200px;text-align:right;top:309.89px;font-size:11px;line-height:11px;color:#000">260</div>
<div class="a" style="left:912px;top:306px;width:64px;height:18px;background:#fff;border-top:2px solid #5a5a5a;border-left:2px solid #5a5a5a;border-right:1px solid #e8e8e8;border-bottom:1px solid #e8e8e8"></div>
<svg class="a" style="left:987px;top:309px" width="16" height="10"><use href="#ieye"/></svg>
<svg class="a" style="left:1062px;top:308px" width="13" height="13"><use href="#iorg"/></svg>
<div class="a" style="left:0px;top:325px;width:1088px;height:18px;background:#fff"></div>
<div class="a" style="left:0px;top:343px;width:1088px;height:1px;background:#009493"></div>
<div class="a" style="left:19px;top:325px;width:1px;height:18px;background:#009493"></div>
<div class="a" style="left:59px;top:325px;width:1px;height:18px;background:#009493"></div>
<div class="a" style="left:188px;top:325px;width:1px;height:18px;background:#009493"></div>
<div class="a" style="left:266px;top:325px;width:1px;height:18px;background:#009493"></div>
<div class="a" style="left:597px;top:325px;width:1px;height:18px;background:#009493"></div>
<div class="a" style="left:698px;top:325px;width:1px;height:18px;background:#009493"></div>
<div class="a" style="left:775px;top:325px;width:1px;height:18px;background:#009493"></div>
<div class="a" style="left:836px;top:325px;width:1px;height:18px;background:#009493"></div>
<div class="a" style="left:911px;top:325px;width:1px;height:18px;background:#009493"></div>
<div class="a" style="left:977px;top:325px;width:1px;height:18px;background:#009493"></div>
<div class="a" style="left:1013px;top:325px;width:1px;height:18px;background:#009493"></div>
<div class="a" style="left:1050px;top:325px;width:1px;height:18px;background:#009493"></div>
<div class="a" style="left:1087px;top:325px;width:1px;height:18px;background:#009493"></div>
<div class="a" style="left:4px;top:328px;width:11px;height:11px;background:#fff;border:1px solid #555"></div>
<div class="a nw" style="left:24px;top:328.89px;font-size:11px;line-height:11px;color:#000;">17</div>
<div class="a nw" style="left:63px;top:328.89px;font-size:11px;line-height:11px;color:#000;">V07</div>
<div class="a nw" style="left:192px;top:328.89px;font-size:11px;line-height:11px;color:#000;">44007</div>
<div class="a nw" style="left:270px;top:328.89px;font-size:11px;line-height:11px;color:#0000ff;text-decoration:underline">Bell Pepper</div>
<svg class="a" style="left:700px;top:326px" width="16" height="16"><use href="#ibox"/></svg>
<div class="a nw" style="left:720px;top:328.09px;font-size:11px;line-height:11px;color:#2222dd;">A Rack 1<span style="letter-spacing:-1.1px">...</span></div>
<div class="a nw" style="left:634px;width:200px;text-align:right;top:328.89px;font-size:11px;line-height:11px;color:#000">1</div>
<div class="a nw" style="left:709px;width:200px;text-align:right;top:328.89px;font-size:11px;line-height:11px;color:#000">1</div>
<div class="a" style="left:912px;top:325px;width:64px;height:18px;background:#fff;border-top:2px solid #5a5a5a;border-left:2px solid #5a5a5a;border-right:1px solid #e8e8e8;border-bottom:1px solid #e8e8e8"></div>
<svg class="a" style="left:987px;top:328px" width="16" height="10"><use href="#ieye"/></svg>
<svg class="a" style="left:1026px;top:328px" width="14" height="14"><use href="#ichk"/></svg>
<div class="a" style="left:0px;top:344px;width:1088px;height:18px;background:#cce8e9"></div>
<div class="a" style="left:0px;top:362px;width:1088px;height:1px;background:#009493"></div>
<div class="a" style="left:19px;top:344px;width:1px;height:18px;background:#009493"></div>
<div class="a" style="left:59px;top:344px;width:1px;height:18px;background:#009493"></div>
<div class="a" style="left:188px;top:344px;width:1px;height:18px;background:#009493"></div>
<div class="a" style="left:266px;top:344px;width:1px;height:18px;background:#009493"></div>
<div class="a" style="left:597px;top:344px;width:1px;height:18px;background:#009493"></div>
<div class="a" style="left:698px;top:344px;width:1px;height:18px;background:#009493"></div>
<div class="a" style="left:775px;top:344px;width:1px;height:18px;background:#009493"></div>
<div class="a" style="left:836px;top:344px;width:1px;height:18px;background:#009493"></div>
<div class="a" style="left:911px;top:344px;width:1px;height:18px;background:#009493"></div>
<div class="a" style="left:977px;top:344px;width:1px;height:18px;background:#009493"></div>
<div class="a" style="left:1013px;top:344px;width:1px;height:18px;background:#009493"></div>
<div class="a" style="left:1050px;top:344px;width:1px;height:18px;background:#009493"></div>
<div class="a" style="left:1087px;top:344px;width:1px;height:18px;background:#009493"></div>
<div class="a" style="left:4px;top:347px;width:11px;height:11px;background:#fff;border:1px solid #555"></div>
<div class="a nw" style="left:24px;top:347.89px;font-size:11px;line-height:11px;color:#000;">18</div>
<div class="a nw" style="left:63px;top:347.89px;font-size:11px;line-height:11px;color:#000;">BOM1</div>
<div class="a nw" style="left:270px;top:347.89px;font-size:11px;line-height:11px;color:#0000ff;text-decoration:underline">BOM1</div>
<svg class="a" style="left:700px;top:345px" width="16" height="16"><use href="#ibox"/></svg>
<div class="a nw" style="left:720px;top:347.09px;font-size:11px;line-height:11px;color:#2222dd;">A Rack 1<span style="letter-spacing:-1.1px">...</span></div>
<div class="a nw" style="left:634px;width:200px;text-align:right;top:347.89px;font-size:11px;line-height:11px;color:#000">10</div>
<div class="a nw" style="left:709px;width:200px;text-align:right;top:347.89px;font-size:11px;line-height:11px;color:#000">5000</div>
<div class="a" style="left:912px;top:344px;width:64px;height:18px;background:#fff;border-top:2px solid #5a5a5a;border-left:2px solid #5a5a5a;border-right:1px solid #e8e8e8;border-bottom:1px solid #e8e8e8"></div>
<svg class="a" style="left:987px;top:347px" width="16" height="10"><use href="#ieye"/></svg>
<svg class="a" style="left:1026px;top:347px" width="14" height="14"><use href="#ichk"/></svg>
<svg class="a" style="left:1062px;top:346px" width="13" height="13"><use href="#iorg"/></svg>
<div class="a" style="left:0px;top:363px;width:1088px;height:18px;background:#fff"></div>
<div class="a" style="left:0px;top:381px;width:1088px;height:1px;background:#009493"></div>
<div class="a" style="left:19px;top:363px;width:1px;height:18px;background:#009493"></div>
<div class="a" style="left:59px;top:363px;width:1px;height:18px;background:#009493"></div>
<div class="a" style="left:188px;top:363px;width:1px;height:18px;background:#009493"></div>
<div class="a" style="left:266px;top:363px;width:1px;height:18px;background:#009493"></div>
<div class="a" style="left:597px;top:363px;width:1px;height:18px;background:#009493"></div>
<div class="a" style="left:698px;top:363px;width:1px;height:18px;background:#009493"></div>
<div class="a" style="left:775px;top:363px;width:1px;height:18px;background:#009493"></div>
<div class="a" style="left:836px;top:363px;width:1px;height:18px;background:#009493"></div>
<div class="a" style="left:911px;top:363px;width:1px;height:18px;background:#009493"></div>
<div class="a" style="left:977px;top:363px;width:1px;height:18px;background:#009493"></div>
<div class="a" style="left:1013px;top:363px;width:1px;height:18px;background:#009493"></div>
<div class="a" style="left:1050px;top:363px;width:1px;height:18px;background:#009493"></div>
<div class="a" style="left:1087px;top:363px;width:1px;height:18px;background:#009493"></div>
<div class="a" style="left:4px;top:366px;width:11px;height:11px;background:#fff;border:1px solid #555"></div>
<div class="a nw" style="left:24px;top:366.89px;font-size:11px;line-height:11px;color:#000;">19</div>
<div class="a nw" style="left:63px;top:366.89px;font-size:11px;line-height:11px;color:#000;">BOM2</div>
<div class="a nw" style="left:270px;top:366.89px;font-size:11px;line-height:11px;color:#0000ff;text-decoration:underline">BOM2</div>
<svg class="a" style="left:700px;top:364px" width="16" height="16"><use href="#ibox"/></svg>
<div class="a nw" style="left:720px;top:366.09px;font-size:11px;line-height:11px;color:#2222dd;">A Rack 1<span style="letter-spacing:-1.1px">...</span></div>
<div class="a nw" style="left:634px;width:200px;text-align:right;top:366.89px;font-size:11px;line-height:11px;color:#000">0</div>
<div class="a nw" style="left:709px;width:200px;text-align:right;top:366.89px;font-size:11px;line-height:11px;color:#000">5005</div>
<div class="a" style="left:912px;top:363px;width:64px;height:18px;background:#fff;border-top:2px solid #5a5a5a;border-left:2px solid #5a5a5a;border-right:1px solid #e8e8e8;border-bottom:1px solid #e8e8e8"></div>
<svg class="a" style="left:987px;top:366px" width="16" height="10"><use href="#ieye"/></svg>
<svg class="a" style="left:1062px;top:365px" width="13" height="13"><use href="#iorg"/></svg>
<div class="a" style="left:0px;top:382px;width:1088px;height:18px;background:#cce8e9"></div>
<div class="a" style="left:0px;top:400px;width:1088px;height:1px;background:#009493"></div>
<div class="a" style="left:19px;top:382px;width:1px;height:18px;background:#009493"></div>
<div class="a" style="left:59px;top:382px;width:1px;height:18px;background:#009493"></div>
<div class="a" style="left:188px;top:382px;width:1px;height:18px;background:#009493"></div>
<div class="a" style="left:266px;top:382px;width:1px;height:18px;background:#009493"></div>
<div class="a" style="left:597px;top:382px;width:1px;height:18px;background:#009493"></div>
<div class="a" style="left:698px;top:382px;width:1px;height:18px;background:#009493"></div>
<div class="a" style="left:775px;top:382px;width:1px;height:18px;background:#009493"></div>
<div class="a" style="left:836px;top:382px;width:1px;height:18px;background:#009493"></div>
<div class="a" style="left:911px;top:382px;width:1px;height:18px;background:#009493"></div>
<div class="a" style="left:977px;top:382px;width:1px;height:18px;background:#009493"></div>
<div class="a" style="left:1013px;top:382px;width:1px;height:18px;background:#009493"></div>
<div class="a" style="left:1050px;top:382px;width:1px;height:18px;background:#009493"></div>
<div class="a" style="left:1087px;top:382px;width:1px;height:18px;background:#009493"></div>
<div class="a" style="left:4px;top:385px;width:11px;height:11px;background:#fff;border:1px solid #555"></div>
<div class="a nw" style="left:24px;top:385.89px;font-size:11px;line-height:11px;color:#000;">20</div>
<div class="a nw" style="left:63px;top:385.89px;font-size:11px;line-height:11px;color:#000;">BOM3</div>
<div class="a nw" style="left:270px;top:385.89px;font-size:11px;line-height:11px;color:#0000ff;text-decoration:underline">BOM3</div>
<svg class="a" style="left:700px;top:383px" width="16" height="16"><use href="#ibox"/></svg>
<div class="a nw" style="left:720px;top:385.09px;font-size:11px;line-height:11px;color:#2222dd;">A Rack 1<span style="letter-spacing:-1.1px">...</span></div>
<div class="a nw" style="left:634px;width:200px;text-align:right;top:385.89px;font-size:11px;line-height:11px;color:#000">0</div>
<div class="a nw" style="left:709px;width:200px;text-align:right;top:385.89px;font-size:11px;line-height:11px;color:#000">5010</div>
<div class="a" style="left:912px;top:382px;width:64px;height:18px;background:#fff;border-top:2px solid #5a5a5a;border-left:2px solid #5a5a5a;border-right:1px solid #e8e8e8;border-bottom:1px solid #e8e8e8"></div>
<svg class="a" style="left:987px;top:385px" width="16" height="10"><use href="#ieye"/></svg>
<svg class="a" style="left:1062px;top:384px" width="13" height="13"><use href="#iorg"/></svg>
<div class="a" style="left:0px;top:401px;width:1088px;height:18px;background:#fff"></div>
<div class="a" style="left:0px;top:419px;width:1088px;height:1px;background:#009493"></div>
<div class="a" style="left:19px;top:401px;width:1px;height:18px;background:#009493"></div>
<div class="a" style="left:59px;top:401px;width:1px;height:18px;background:#009493"></div>
<div class="a" style="left:188px;top:401px;width:1px;height:18px;background:#009493"></div>
<div class="a" style="left:266px;top:401px;width:1px;height:18px;background:#009493"></div>
<div class="a" style="left:597px;top:401px;width:1px;height:18px;background:#009493"></div>
<div class="a" style="left:698px;top:401px;width:1px;height:18px;background:#009493"></div>
<div class="a" style="left:775px;top:401px;width:1px;height:18px;background:#009493"></div>
<div class="a" style="left:836px;top:401px;width:1px;height:18px;background:#009493"></div>
<div class="a" style="left:911px;top:401px;width:1px;height:18px;background:#009493"></div>
<div class="a" style="left:977px;top:401px;width:1px;height:18px;background:#009493"></div>
<div class="a" style="left:1013px;top:401px;width:1px;height:18px;background:#009493"></div>
<div class="a" style="left:1050px;top:401px;width:1px;height:18px;background:#009493"></div>
<div class="a" style="left:1087px;top:401px;width:1px;height:18px;background:#009493"></div>
<div class="a" style="left:4px;top:404px;width:11px;height:11px;background:#fff;border:1px solid #555"></div>
<div class="a nw" style="left:24px;top:404.89px;font-size:11px;line-height:11px;color:#000;">21</div>
<div class="a nw" style="left:63px;top:404.89px;font-size:11px;line-height:11px;color:#000;">BOMPrd</div>
<div class="a nw" style="left:270px;top:404.89px;font-size:11px;line-height:11px;color:#0000ff;text-decoration:underline">BOMPrd</div>
<div class="a nw" style="left:634px;width:200px;text-align:right;top:404.89px;font-size:11px;line-height:11px;color:#000">100</div>
<div class="a nw" style="left:709px;width:200px;text-align:right;top:404.89px;font-size:11px;line-height:11px;color:#000">990</div>
<div class="a" style="left:912px;top:401px;width:64px;height:18px;background:#fff;border-top:2px solid #5a5a5a;border-left:2px solid #5a5a5a;border-right:1px solid #e8e8e8;border-bottom:1px solid #e8e8e8"></div>
<svg class="a" style="left:987px;top:404px" width="16" height="10"><use href="#ieye"/></svg>
<svg class="a" style="left:1062px;top:403px" width="13" height="13"><use href="#iorg"/></svg>
<div class="a" style="left:0px;top:420px;width:1088px;height:18px;background:#cce8e9"></div>
<div class="a" style="left:0px;top:438px;width:1088px;height:1px;background:#009493"></div>
<div class="a" style="left:19px;top:420px;width:1px;height:18px;background:#009493"></div>
<div class="a" style="left:59px;top:420px;width:1px;height:18px;background:#009493"></div>
<div class="a" style="left:188px;top:420px;width:1px;height:18px;background:#009493"></div>
<div class="a" style="left:266px;top:420px;width:1px;height:18px;background:#009493"></div>
<div class="a" style="left:597px;top:420px;width:1px;height:18px;background:#009493"></div>
<div class="a" style="left:698px;top:420px;width:1px;height:18px;background:#009493"></div>
<div class="a" style="left:775px;top:420px;width:1px;height:18px;background:#009493"></div>
<div class="a" style="left:836px;top:420px;width:1px;height:18px;background:#009493"></div>
<div class="a" style="left:911px;top:420px;width:1px;height:18px;background:#009493"></div>
<div class="a" style="left:977px;top:420px;width:1px;height:18px;background:#009493"></div>
<div class="a" style="left:1013px;top:420px;width:1px;height:18px;background:#009493"></div>
<div class="a" style="left:1050px;top:420px;width:1px;height:18px;background:#009493"></div>
<div class="a" style="left:1087px;top:420px;width:1px;height:18px;background:#009493"></div>
<div class="a" style="left:4px;top:423px;width:11px;height:11px;background:#fff;border:1px solid #555"></div>
<div class="a nw" style="left:24px;top:423.89px;font-size:11px;line-height:11px;color:#000;">22</div>
<div class="a nw" style="left:63px;top:423.89px;font-size:11px;line-height:11px;color:#000;">AS001</div>
<svg class="a" style="left:268px;top:421px" width="16" height="16"><use href="#iasm"/></svg>
<div class="a nw" style="left:288px;top:423.89px;font-size:11px;line-height:11px;color:#0000ff;text-decoration:underline">Bundle</div>
<div class="a nw" style="left:634px;width:200px;text-align:right;top:423.89px;font-size:11px;line-height:11px;color:#000">1</div>
<div class="a nw" style="left:709px;width:200px;text-align:right;top:423.89px;font-size:11px;line-height:11px;color:#000">2</div>
<div class="a" style="left:912px;top:420px;width:64px;height:18px;background:#fff;border-top:2px solid #5a5a5a;border-left:2px solid #5a5a5a;border-right:1px solid #e8e8e8;border-bottom:1px solid #e8e8e8"></div>
<svg class="a" style="left:987px;top:423px" width="16" height="10"><use href="#ieye"/></svg>
<svg class="a" style="left:1062px;top:422px" width="13" height="13"><use href="#iorg"/></svg>
<div class="a" style="left:0px;top:439px;width:1088px;height:18px;background:#fff"></div>
<div class="a" style="left:0px;top:457px;width:1088px;height:1px;background:#009493"></div>
<div class="a" style="left:19px;top:439px;width:1px;height:18px;background:#009493"></div>
<div class="a" style="left:59px;top:439px;width:1px;height:18px;background:#009493"></div>
<div class="a" style="left:188px;top:439px;width:1px;height:18px;background:#009493"></div>
<div class="a" style="left:266px;top:439px;width:1px;height:18px;background:#009493"></div>
<div class="a" style="left:597px;top:439px;width:1px;height:18px;background:#009493"></div>
<div class="a" style="left:698px;top:439px;width:1px;height:18px;background:#009493"></div>
<div class="a" style="left:775px;top:439px;width:1px;height:18px;background:#009493"></div>
<div class="a" style="left:836px;top:439px;width:1px;height:18px;background:#009493"></div>
<div class="a" style="left:911px;top:439px;width:1px;height:18px;background:#009493"></div>
<div class="a" style="left:977px;top:439px;width:1px;height:18px;background:#009493"></div>
<div class="a" style="left:1013px;top:439px;width:1px;height:18px;background:#009493"></div>
<div class="a" style="left:1050px;top:439px;width:1px;height:18px;background:#009493"></div>
<div class="a" style="left:1087px;top:439px;width:1px;height:18px;background:#009493"></div>
<div class="a" style="left:4px;top:442px;width:11px;height:11px;background:#fff;border:1px solid #555"></div>
<div class="a nw" style="left:24px;top:442.89px;font-size:11px;line-height:11px;color:#000;">23</div>
<div class="a nw" style="left:63px;top:442.89px;font-size:11px;line-height:11px;color:#000;">AS002</div>
<svg class="a" style="left:268px;top:440px" width="16" height="16"><use href="#iasm"/></svg>
<div class="a nw" style="left:288px;top:442.89px;font-size:11px;line-height:11px;color:#0000ff;text-decoration:underline">Bundle1</div>
<div class="a nw" style="left:634px;width:200px;text-align:right;top:442.89px;font-size:11px;line-height:11px;color:#000">0</div>
<div class="a nw" style="left:709px;width:200px;text-align:right;top:442.89px;font-size:11px;line-height:11px;color:#000">0</div>
<div class="a" style="left:912px;top:439px;width:64px;height:18px;background:#fff;border-top:2px solid #5a5a5a;border-left:2px solid #5a5a5a;border-right:1px solid #e8e8e8;border-bottom:1px solid #e8e8e8"></div>
<svg class="a" style="left:987px;top:442px" width="16" height="10"><use href="#ieye"/></svg>
<div class="a" style="left:0px;top:458px;width:1088px;height:18px;background:#cce8e9"></div>
<div class="a" style="left:0px;top:476px;width:1088px;height:1px;background:#009493"></div>
<div class="a" style="left:19px;top:458px;width:1px;height:18px;background:#009493"></div>
<div class="a" style="left:59px;top:458px;width:1px;height:18px;background:#009493"></div>
<div class="a" style="left:188px;top:458px;width:1px;height:18px;background:#009493"></div>
<div class="a" style="left:266px;top:458px;width:1px;height:18px;background:#009493"></div>
<div class="a" style="left:597px;top:458px;width:1px;height:18px;background:#009493"></div>
<div class="a" style="left:698px;top:458px;width:1px;height:18px;background:#009493"></div>
<div class="a" style="left:775px;top:458px;width:1px;height:18px;background:#009493"></div>
<div class="a" style="left:836px;top:458px;width:1px;height:18px;background:#009493"></div>
<div class="a" style="left:911px;top:458px;width:1px;height:18px;background:#009493"></div>
<div class="a" style="left:977px;top:458px;width:1px;height:18px;background:#009493"></div>
<div class="a" style="left:1013px;top:458px;width:1px;height:18px;background:#009493"></div>
<div class="a" style="left:1050px;top:458px;width:1px;height:18px;background:#009493"></div>
<div class="a" style="left:1087px;top:458px;width:1px;height:18px;background:#009493"></div>
<div class="a" style="left:4px;top:461px;width:11px;height:11px;background:#fff;border:1px solid #555"></div>
<div class="a nw" style="left:24px;top:461.89px;font-size:11px;line-height:11px;color:#000;">24</div>
<div class="a nw" style="left:63px;top:461.89px;font-size:11px;line-height:11px;color:#000;">AS003</div>
<svg class="a" style="left:268px;top:459px" width="16" height="16"><use href="#iasm"/></svg>
<div class="a nw" style="left:288px;top:461.89px;font-size:11px;line-height:11px;color:#0000ff;text-decoration:underline">Bundle3</div>
<div class="a nw" style="left:634px;width:200px;text-align:right;top:461.89px;font-size:11px;line-height:11px;color:#000">0</div>
<div class="a nw" style="left:709px;width:200px;text-align:right;top:461.89px;font-size:11px;line-height:11px;color:#000">0</div>
<div class="a" style="left:912px;top:458px;width:64px;height:18px;background:#fff;border-top:2px solid #5a5a5a;border-left:2px solid #5a5a5a;border-right:1px solid #e8e8e8;border-bottom:1px solid #e8e8e8"></div>
<svg class="a" style="left:987px;top:461px" width="16" height="10"><use href="#ieye"/></svg>
</div>
<div class="a" style="left:1242px;top:199px;width:17px;height:468px;background-color:#f4f4f4;background-image:linear-gradient(45deg,#e6e6e6 25%,transparent 25%,transparent 75%,#e6e6e6 75%),linear-gradient(45deg,#e6e6e6 25%,transparent 25%,transparent 75%,#e6e6e6 75%);background-size:2px 2px;background-position:0 0,1px 1px"></div>
<div class="a" style="left:154px;top:667px;width:1088px;height:17px;background-color:#f4f4f4;background-image:linear-gradient(45deg,#e6e6e6 25%,transparent 25%,transparent 75%,#e6e6e6 75%),linear-gradient(45deg,#e6e6e6 25%,transparent 25%,transparent 75%,#e6e6e6 75%);background-size:2px 2px;background-position:0 0,1px 1px"></div>
<div class="a" style="left:1242px;top:667px;width:17px;height:17px;background:#f0f0f0"></div>
<div class="a" style="left:1242px;top:199px;width:17px;height:17px;background:#f0f0f0;border-top:1px solid #f8f8f8;border-left:1px solid #f8f8f8;border-right:1px solid #696969;border-bottom:1px solid #696969;box-shadow:inset -1px -1px 0 #a0a0a0"></div>
<div class="a" style="left:1242px;top:216px;width:17px;height:97px;background:#f0f0f0;border-top:1px solid #f8f8f8;border-left:1px solid #f8f8f8;border-right:1px solid #696969;border-bottom:1px solid #696969;box-shadow:inset -1px -1px 0 #a0a0a0"></div>
<div class="a" style="left:1242px;top:650px;width:17px;height:17px;background:#f0f0f0;border-top:1px solid #f8f8f8;border-left:1px solid #f8f8f8;border-right:1px solid #696969;border-bottom:1px solid #696969;box-shadow:inset -1px -1px 0 #a0a0a0"></div>
<div class="a" style="left:154px;top:667px;width:17px;height:17px;background:#f0f0f0;border-top:1px solid #f8f8f8;border-left:1px solid #f8f8f8;border-right:1px solid #696969;border-bottom:1px solid #696969;box-shadow:inset -1px -1px 0 #a0a0a0"></div>
<div class="a" style="left:1225px;top:667px;width:17px;height:17px;background:#f0f0f0;border-top:1px solid #f8f8f8;border-left:1px solid #f8f8f8;border-right:1px solid #696969;border-bottom:1px solid #696969;box-shadow:inset -1px -1px 0 #a0a0a0"></div>
<svg class="a" style="left:1246px;top:204px" width="9" height="5"><path d="M0 5 L9 5 L4.5 0 Z" fill="#000"/></svg>
<svg class="a" style="left:1246px;top:656px" width="9" height="5"><path d="M0 0 L9 0 L4.5 5 Z" fill="#000"/></svg>
<svg class="a" style="left:159px;top:671px" width="5" height="9"><path d="M5 0 L5 9 L0 4.5 Z" fill="#a0a0a0"/></svg>
<svg class="a" style="left:1231px;top:671px" width="5" height="9"><path d="M0 0 L0 9 L5 4.5 Z" fill="#a0a0a0"/></svg>
<div class="a" style="left:1038px;top:143px;width:195px;height:63px;border:3px solid #ff0a0a"></div>
<div class="a nw" style="left:1053.2px;top:158.50px;font-size:13.7px;line-height:13.7px;color:#000;font-weight:bold;">Warehouse:</div>
<div class="a" style="left:1052px;top:173px;width:176px;height:21px;border:1px solid #0078d7;background:#fff"></div>
<div class="a" style="left:1055px;top:176px;width:62px;height:15px;background:#0078d7"></div>
<div class="a nw" style="left:1055.5px;top:178.19px;font-size:11px;line-height:11px;color:#fff;font-weight:normal;">Warehouse1</div>
<svg class="a" style="left:1214px;top:181px" width="10" height="6"><path d="M0.8 0.8 L4.8 4.8 L8.8 0.8" stroke="#333" stroke-width="1.1" fill="none"/></svg>
<div class="a" style="left:1236px;top:135px;width:22px;height:18px;background:#e1e1e1;border:1px solid #adadad"></div>
<svg class="a" style="left:1238px;top:137px" width="18" height="14" viewBox="0 0 18 14"><path d="M1 2 L1 13 L17 13 L17 2" stroke="#555" stroke-width="1.2" fill="none"/><path d="M2 5 L10 2 L16 4 L16 9 L8 12.5 L2 9.5 Z" fill="#222"/><path d="M2.6 5 L10 2.5 L15.5 4.2 L8 6.8 Z" fill="#e0a080"/><path d="M2.6 5 L8 6.8 L8 12 L2.6 9.3 Z" fill="#f0b868"/><path d="M8 6.8 L15.5 4.2 L15.5 8.8 L8 12 Z" fill="#d87c6c"/><path d="M9.5 8 L10.5 7.6 M11.8 7.2 L12.8 6.8 M14 6.4 L15 6" stroke="#111" stroke-width="2"/><path d="M4.5 4.4 L12 1.9" stroke="#a06030" stroke-width="0.8"/></svg>
<div class="a" style="left:1233px;top:174px;width:27px;height:18px;background:#e1e1e1;border:1px solid #adadad"></div>
<svg class="a" style="left:1235px;top:176px" width="23" height="14" viewBox="0 0 23 14"><ellipse cx="6" cy="6" rx="5" ry="4.2" transform="rotate(-25 6 6)" fill="#9ee0f0" stroke="#222" stroke-width="1.3"/><path d="M9.5 8 L18 10.5 M14 9.3 L13.5 12 M17 10 L20 12.5" stroke="#444" stroke-width="1.5"/><path d="M18 9 L21.5 12.5 L18 12 Z" fill="#fff" stroke="#444" stroke-width="0.8"/></svg>
<div class="a" style="left:153px;top:691px;width:70px;height:12px;background:#fdf6ea"></div>
<svg class="a" style="left:154px;top:689px" width="14" height="14"><use href="#ivar"/></svg>
<div class="a nw" style="left:174px;top:693.09px;font-size:11px;line-height:11px;color:#000;font-weight:normal;letter-spacing:0px">Variants</div>
<div class="a" style="left:230px;top:691px;width:92px;height:12px;background:#fdf6ea"></div>
<svg class="a" style="left:230px;top:689px" width="16" height="16"><use href="#iasm"/></svg>
<div class="a nw" style="left:248px;top:693.09px;font-size:11px;line-height:11px;color:#000;font-weight:normal;letter-spacing:-0.14px">Assembly Item</div>
<div class="a" style="left:329px;top:691px;width:93px;height:12px;background:#fdf6ea"></div>
<svg class="a" style="left:331px;top:692px" width="14" height="10" viewBox="0 0 14 10"><path d="M4 1 L14 1 L14 8 L4 8 Z M0.5 4 L3.5 3 L3.5 8 L0.5 8 Z" fill="#111"/><circle cx="3" cy="8.5" r="1.4" fill="#111"/><circle cx="11" cy="8.5" r="1.4" fill="#111"/><rect x="1.2" y="4" width="1.6" height="1.6" fill="#fff"/></svg>
<div class="a nw" style="left:347.4px;top:693.09px;font-size:11px;line-height:11px;color:#000;font-weight:normal;letter-spacing:0px">Drop Ship Item</div>
<div class="a" style="left:153px;top:712px;width:168px;height:12px;background:#fdf6ea"></div>
<svg class="a" style="left:153px;top:710px" width="14" height="14" viewBox="0 0 16 16"><use href="#ibox"/></svg>
<div class="a nw" style="left:172.6px;top:713.29px;font-size:11px;line-height:11px;color:#000;font-weight:normal;letter-spacing:0.24px">Multiple Picking Locations</div>
<div class="a" style="left:153px;top:733px;width:160px;height:16px;background:#fdf6ea"></div>
<svg class="a" style="left:153px;top:733px" width="18" height="16" viewBox="153 733 18 16"><path d="M154 740 L159 738 L168 740 L168 746 L163 748.5 L154 745.5 Z" fill="#4a3a05"/><path d="M154.6 740.2 L159 738.6 L167.4 740.4 L163 742.2 Z" fill="#c4a23c"/><path d="M154.6 740.4 L163 742.4 L163 748 L154.6 745.2 Z" fill="#7a6008"/><path d="M163 742.4 L167.4 740.6 L167.4 745.8 L163 748 Z" fill="#a08018"/><path d="M156.5 741 L158 741.4 L158 743 L156.5 742.6 Z" fill="#3a2a02"/><path d="M162.5 736.5 Q166.5 735 168.2 738.5 Q169.2 742 164 743" stroke="#f01818" stroke-width="1.5" fill="none"/><path d="M160.2 736.8 L163.6 734.2 L163.4 739 Z" fill="#f01818"/></svg>
<div class="a nw" style="left:173.3px;top:735.99px;font-size:11px;line-height:11px;color:#000;font-weight:normal;letter-spacing:0.2px">Process Returned Products</div>
<div class="a" style="left:942px;top:728px;width:21px;height:21px;background:#e1e1e1;border:1px solid #adadad"></div>
<svg class="a" style="left:945px;top:731px" width="15" height="15" viewBox="0 0 15 15"><rect x="0.5" y="0.5" width="14" height="14" fill="#f4f4f4" stroke="#222"/><path d="M3.5 0 L3.5 15 M6.5 0 L6.5 15 M9.5 0 L9.5 15 M12.5 0 L12.5 15 M0 3.5 L15 3.5 M0 6.5 L15 6.5 M0 9.5 L15 9.5 M0 12.5 L15 12.5" stroke="#333" stroke-width="0.8"/><circle cx="6" cy="9" r="3" fill="#8cc8f0" stroke="#3a78c8" stroke-width="0.8"/><path d="M4 11 L1.5 14" stroke="#f0a020" stroke-width="1.4"/></svg>
<div class="a" style="left:994px;top:728px;width:24px;height:21px;background:#e1e1e1;border:1px solid #adadad"></div>
<svg class="a" style="left:997px;top:731px" width="18" height="16" viewBox="0 0 18 16"><rect x="7.5" y="2.5" width="9" height="12" fill="#fff" stroke="#111" stroke-width="1.2"/><path d="M9.5 6 L14.5 6 M9.5 8.5 L14.5 8.5 M9.5 11 L14.5 11" stroke="#111" stroke-width="1"/><path d="M1 4 L10 4 M7 1.5 L10 4 L7 6.5" stroke="#ee1111" stroke-width="1.6" fill="none"/><path d="M9 11 L1.5 11 M4.5 8.5 L1.5 11 L4.5 13.5" stroke="#ee1111" stroke-width="1.6" fill="none"/></svg>
<div class="a" style="left:1023px;top:728px;width:22px;height:21px;background:#e1e1e1;border:1px solid #adadad"></div>
<svg class="a" style="left:1025px;top:731px" width="18" height="15" viewBox="0 0 18 15"><rect x="7" y="0.5" width="8" height="8" fill="#dde8f0" stroke="#777" stroke-width="0.8"/><rect x="13" y="3" width="4" height="8" fill="#ccc"/><path d="M1 8 L9 12 L17 9 L17 12 L9 15 L1 11 Z" fill="#c8102e"/><path d="M3 8 L7 5 L13 8 L9 11 Z" fill="#222"/></svg>
<div class="a" style="left:1050px;top:728px;width:21px;height:21px;background:#e5f1fb;border:1px solid #0078d7"></div>
<svg class="a" style="left:1053px;top:733px" width="15" height="12" viewBox="0 0 15 12"><path d="M2 0 L13 0 L15 3 L0 3 Z" fill="#555"/><rect x="0" y="3.5" width="15" height="8.5" fill="#555"/><path d="M2 6 L13 6 M2 9 L13 9" stroke="#ddd" stroke-width="1"/><rect x="4" y="5" width="1.5" height="2" fill="#ddd"/></svg>
<div class="a" style="left:1075px;top:728px;width:22px;height:21px;background:#e1e1e1;border:1px solid #adadad"></div>
<svg class="a" style="left:1077px;top:730px" width="18" height="18" viewBox="0 0 18 18"><circle cx="9" cy="9" r="8" fill="#f47a20"/><path d="M4 6 L11 6 L10.5 13 L4.5 13 Z" fill="#e6e6e6"/><path d="M4.5 8.5 L10.8 8.5 M4.5 10.8 L10.6 10.8" stroke="#b0a080" stroke-width="0.8"/><path d="M14 5 Q12.8 4.6 12.4 6 L11.8 14.5 L3.5 14.5" stroke="#111" stroke-width="1.5" fill="none"/><circle cx="4.5" cy="15.3" r="1.3" fill="#111"/><circle cx="10.8" cy="15.3" r="1.3" fill="#111"/></svg>
<div class="a" style="left:1102px;top:728px;width:20px;height:21px;background:#e1e1e1;border:1px solid #adadad"></div>
<svg class="a" style="left:1104px;top:731px" width="16" height="15" viewBox="0 0 16 15"><rect x="2.5" y="2.5" width="11" height="9" fill="#f3d66a" stroke="#111" stroke-width="1.4"/><rect x="2" y="5" width="12" height="1.2" fill="#111"/></svg>
<div class="a" style="left:1127px;top:728px;width:22px;height:21px;background:#e1e1e1;border:1px solid #adadad"></div>
<svg class="a" style="left:1130px;top:731px" width="16" height="15" viewBox="0 0 16 15"><rect x="0.5" y="0.5" width="15" height="14" fill="#0a7a1a"/><rect x="2.5" y="2.5" width="11" height="9" fill="#fff"/><path d="M5 4 L11 10" stroke="#0a7a1a" stroke-width="1.6"/><rect x="2.5" y="10" width="11" height="1.5" fill="#0a7a1a"/></svg>
<div class="a" style="left:1154px;top:728px;width:48px;height:21px;background:#cccccc;border:1px solid #bfbfbf"></div>
<div class="a" style="left:1156px;top:730px;width:44px;height:17px;background:#e8e8e8;border:1px solid #d6d6d6"></div>
<div class="a nw" style="left:1162px;top:733.51px;font-size:10.5px;line-height:10.5px;color:#b4b4b4;font-weight:normal;">Update</div>
<div class="a" style="left:1207px;top:728px;width:47px;height:21px;background:#e1e1e1;border:1px solid #adadad"></div>
<div class="a" style="left:1208px;top:729px;width:45px;height:19px;border:1px solid #ececec"></div>
<div class="a nw" style="left:1215.8px;top:732.44px;font-size:12px;line-height:12px;color:#000;font-weight:normal;letter-spacing:-0.3px">Close</div>
<div class="a" style="left:1063px;top:718px;width:121px;height:19px;background:#fff;border:1px solid #767676;box-shadow:2px 2px 2px rgba(0,0,0,0.25)"></div>
<div class="a nw" style="left:1068.3px;top:721.70px;font-size:12.4px;line-height:12.4px;color:#575757;font-weight:normal;">Multiple Adjustment</div>
<svg class="a" style="left:1015px;top:628px" width="60" height="100" viewBox="0 0 60 100"><path d="M8.5 6.5 L39 84" stroke="#ee1111" stroke-width="3" stroke-linecap="round"/><path d="M33.5 80.5 L43.8 91.5 L43 76.8 Z" fill="#ee1111" stroke="#ee1111" stroke-width="1.5" stroke-linejoin="round"/></svg>
<svg class="a" style="left:1061px;top:736px" width="16" height="21" viewBox="0 0 16 21"><path d="M1.5 1.5 L1.5 17 L5.3 13.4 L8.2 19.8 L10.6 18.8 L7.8 12.6 L12.8 12.6 Z" fill="#fff" stroke="#000" stroke-width="1" stroke-linejoin="miter"/></svg>
<div class="a" style="left:142px;top:756px;width:1130px;height:1px;background:#dcdcdc"></div>
<div class="a" style="left:1271px;top:84px;width:1px;height:673px;background:#dcdcdc"></div></body></html>
